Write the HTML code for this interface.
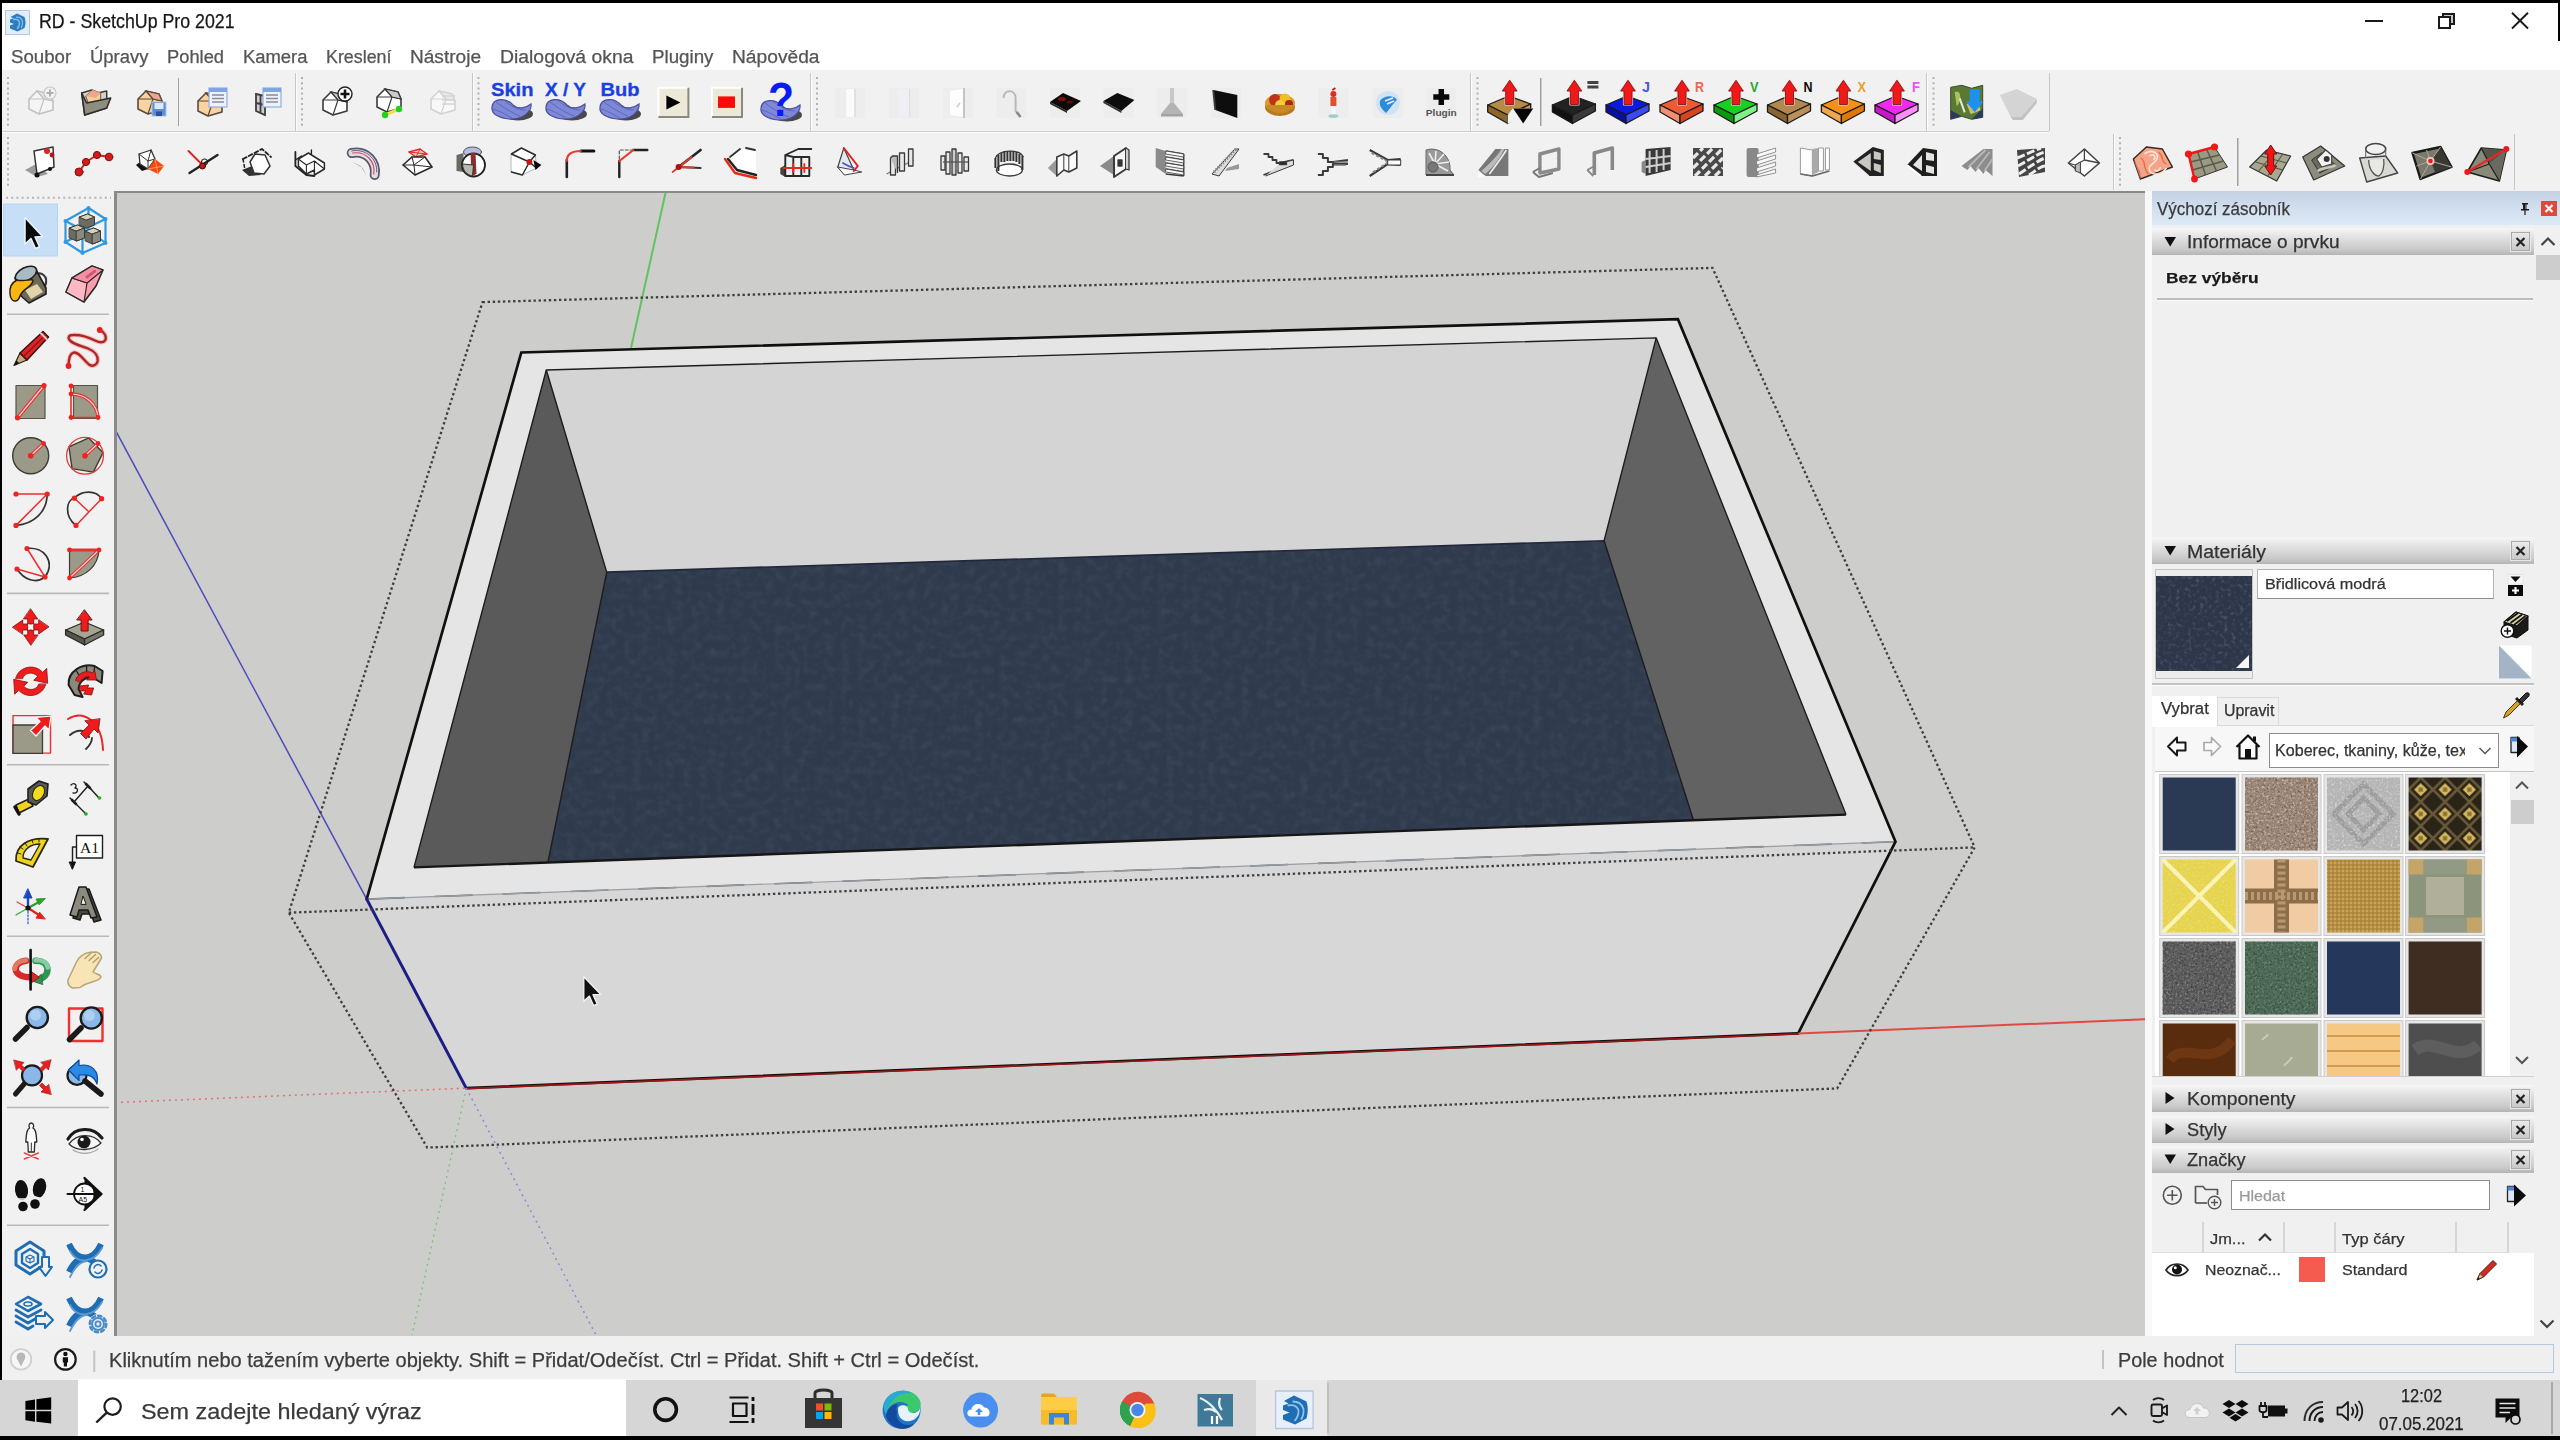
<!DOCTYPE html>
<html><head><meta charset="utf-8">
<style>
*{box-sizing:border-box;margin:0;padding:0}
html,body{width:2560px;height:1440px;overflow:hidden;background:#000;font-family:"Liberation Sans",sans-serif;color:#222}
.a{position:absolute}
.t{position:absolute;white-space:nowrap;line-height:1;transform-origin:0 0;-webkit-text-stroke:.25px currentColor}
#title{left:2px;top:3px;width:2556px;height:37px;background:#fff}
#menu{left:2px;top:40px;width:2558px;height:30px;background:#fff}
#tb{left:2px;top:70px;width:2558px;height:122px;background:#f1f1f1}
#lt{left:2px;top:192px;width:112px;height:1144px;background:#f1f1f1}
#vpb{left:114px;top:191px;width:2031px;height:1145px;background:#8a8a8a}
#vp{left:117px;top:193px;width:2028px;height:1143px;background:#cdcdcb;overflow:hidden}
#rp{left:2145px;top:191px;width:415px;height:1145px;background:#f0f0f0}
#sb{left:2px;top:1336px;width:2558px;height:44px;background:#f0f0f0}
#tk{left:0;top:1380px;width:2560px;height:55.500px;background:#d6d6d6}
.sh{position:absolute;left:7px;width:382px;height:27px;background:linear-gradient(#f6f6f6 0%,#dcdcdc 45%,#c9c9c9 80%,#b4b4b4 100%)}
.sh .x{position:absolute;right:3px;top:3px;width:21px;height:21px;border:1px solid #e8e8e8;outline:1px solid #aaa;outline-offset:-2px}
</style></head><body>
<div class="a" id="title"></div>
<div class="a" id="menu"></div>
<div class="a" style="left:2558px;top:0;width:2px;height:41px;background:#000"></div>
<!-- app icon -->
<div class="a" style="left:5px;top:10px;width:25px;height:25px;background:#e3edf9;border:1px solid #b9c7da"></div>
<svg class="a" style="left:7px;top:12px" width="21" height="21" viewBox="0 0 21 21"><path d="M10 1.5 L17.5 5 Q19.5 10.5 17.5 16 L10.5 19.5 L3 16.5 L3 13.5 L7 12 L3 10.5 L3 7.5 L6.5 6.3 L3.5 5 Z" fill="#2b7dc0"/><path d="M6 7.5 Q11 6.5 12.5 10 Q13 14 10 17 M9 5.2 Q14.5 5 15.5 9.5 Q16 13.5 14 16" fill="none" stroke="#7fc0ec" stroke-width="1.3"/></svg>
<div class="t" style="left:39.4px;top:11.94px;font-size:19.8px;color:#161616;transform:scaleX(0.8985)">RD - SketchUp Pro 2021</div>
<!-- window controls -->
<div class="a" style="left:2365px;top:20px;width:18px;height:2px;background:#1a1a1a"></div>
<div class="a" style="left:2442px;top:13px;width:13px;height:12px;border:2px solid #1a1a1a;background:#c9c9c9"></div>
<div class="a" style="left:2438px;top:16px;width:13px;height:13px;border:2px solid #1a1a1a;background:#fff"></div>
<svg class="a" style="left:2508px;top:9px" width="24" height="24" viewBox="0 0 24 24"><path d="M4 3.7 L20 19.5 M20 3.7 L4 19.5" stroke="#1a1a1a" stroke-width="1.9"/></svg>
<!-- menu -->
<div class="t" style="left:11.2px;top:48.80px;font-size:17.6px;color:#555;transform:scaleX(1.0611)">Soubor</div>
<div class="t" style="left:90px;top:48.80px;font-size:17.6px;color:#555;transform:scaleX(1.0496)">Úpravy</div>
<div class="t" style="left:166.5px;top:48.80px;font-size:17.6px;color:#555;transform:scaleX(1.0402)">Pohled</div>
<div class="t" style="left:242.5px;top:48.80px;font-size:17.6px;color:#555;transform:scaleX(1.0469)">Kamera</div>
<div class="t" style="left:326px;top:48.80px;font-size:17.6px;color:#555;transform:scaleX(1.0148)">Kreslení</div>
<div class="t" style="left:410px;top:48.80px;font-size:17.6px;color:#555;transform:scaleX(1.0837)">Nástroje</div>
<div class="t" style="left:500px;top:48.80px;font-size:17.6px;color:#555;transform:scaleX(1.1006)">Dialogová okna</div>
<div class="t" style="left:651.5px;top:48.80px;font-size:17.6px;color:#555;transform:scaleX(1.0655)">Pluginy</div>
<div class="t" style="left:731.5px;top:48.80px;font-size:17.6px;color:#555;transform:scaleX(1.0908)">Nápověda</div>
<div class="a" id="tb"></div>
<svg class="a" style="left:0;top:70px" width="2560" height="122" viewBox="0 70 2560 122" font-family="Liberation Sans" >
<defs>
<g id="grip"><line x1="0" y1="0" x2="0" y2="52" stroke="#b2b2b2" stroke-width="2" stroke-dasharray="2 3.2"/></g>
<g id="house"><path d="M-12,-3 L-4,-11 L9,-8 L12,-1 L12,8 L-2,12 L-12,7Z" fill="var(--f,#fff)" stroke="var(--s,#3a3a3a)" stroke-width="1.6" stroke-linejoin="round"/><path d="M-4,-11 L3,-3 L12,-1 M3,-3 L-2,12 M-12,-3 L3,-3" fill="none" stroke="var(--s,#3a3a3a)" stroke-width="1.2"/><path d="M-4,-11 L9,-8 L12,-1 L3,-3Z" fill="var(--r,#ccc)" stroke="var(--s,#3a3a3a)" stroke-width="1.2"/></g>
<g id="doc"><rect x="-9" y="-10" width="18" height="19" fill="#eef3fb" stroke="#8fb0e0" stroke-width="1.2"/><rect x="-9" y="-10" width="18" height="4" fill="#7ea6e0"/><path d="M-6,-3 H6 M-6,0.500 H6 M-6,4 H6" stroke="#8a8a9a" stroke-width="1.3"/></g>
<g id="blob"><ellipse cx="6" cy="6" rx="15" ry="6.500" fill="#2c2c2c" opacity=".85"/><path d="M-20,-1 C-19,-10 -6,-11 1,-3 C6,2 14,0 19,-4 C20,4 10,12 -3,11 C-13,10 -21,6 -20,-1Z" fill="#7d88d6" stroke="#4a4f9c" stroke-width="1.2"/><path d="M-16,-6 C-8,0 2,6 8,8 M-19,1 C-10,4 -4,8 0,10 M-8,-8 C-2,-2 6,2 14,2" stroke="#5b63b8" stroke-width="0.900" fill="none"/></g>
<g id="jpp"><path d="M-22,3 L-1,-6 L21,2 L-2,13Z" fill="var(--t)" stroke="#1a1a1a" stroke-width="1.300" stroke-linejoin="round"/><path d="M-22,3 L-2,13 L-2,21.500 L-22,10Z" fill="var(--l)" stroke="#1a1a1a" stroke-width="1.300" stroke-linejoin="round"/><path d="M21,2 L-2,13 L-2,21.500 L21,9Z" fill="var(--r)" stroke="#1a1a1a" stroke-width="1.300" stroke-linejoin="round"/><path d="M0,-21.700 L7.300,-11 L4,-11 L4,2.500 L-4,2.500 L-4,-11 L-7.300,-11Z" fill="#f31818" stroke="#f6d6d6" stroke-width="2.200" stroke-linejoin="round"/><path d="M0,-21.700 L7.300,-11 L4,-11 L4,2.500 L-4,2.500 L-4,-11 L-7.300,-11Z" fill="#f31818" stroke="#7a1c1c" stroke-width=".9" stroke-linejoin="round"/></g>
<g id="tile"><rect x="-15" y="-15" width="30" height="30" fill="#ededed"/></g>
</defs>
<!-- row separators -->
<rect x="2" y="131" width="2047" height="1" fill="#cfcfcf"/><rect x="2" y="132" width="2047" height="1" fill="#fbfbfb"/>
<g fill="#c6c6c6"><rect x="295" y="73" width="1" height="58"/><rect x="472" y="73" width="1" height="58"/><rect x="810" y="73" width="1" height="58"/><rect x="1470" y="73" width="1" height="58"/><rect x="1926" y="73" width="1" height="58"/><rect x="2049" y="73" width="1" height="58"/><rect x="2113" y="134" width="1" height="56"/><rect x="2514" y="134" width="1" height="56"/></g>
<g fill="#fdfdfd"><rect x="296" y="73" width="1" height="58"/><rect x="473" y="73" width="1" height="58"/><rect x="811" y="73" width="1" height="58"/><rect x="1471" y="73" width="1" height="58"/><rect x="1927" y="73" width="1" height="58"/><rect x="2114" y="134" width="1" height="56"/></g>
<g fill="#a0a0a0"><rect x="178" y="78" width="1" height="48"/><rect x="1540" y="78" width="1.500" height="48"/><rect x="2237" y="138" width="1.500" height="48"/></g>
<use href="#grip" x="8" y="77"/><use href="#grip" x="302" y="77"/><use href="#grip" x="478.500" y="77"/><use href="#grip" x="817" y="77"/><use href="#grip" x="1477.500" y="77"/><use href="#grip" x="1933.500" y="77"/>
<use href="#grip" x="8" y="137"/><use href="#grip" x="2120" y="137"/>
<!-- ROW 1 -->
<g transform="translate(41,102)" opacity=".9"><use href="#house" style="--f:#f6f6f6;--s:#bdbdbd;--r:#e2e2e2"/><circle cx="9" cy="-9" r="6" fill="#f4f4f4" stroke="#c4c4c4" stroke-width="1.2"/><path d="M9,-12.500 V-5.500 M5.500,-9 H12.500" stroke="#a8a8a8" stroke-width="2"/></g>
<g transform="translate(94.700,102)"><path d="M-13,-9 L-3,-12 L3,-9 L12,-11 L12,6 L-10,13Z" fill="#d8d4c4" stroke="#3a3a3a" stroke-width="1.500" stroke-linejoin="round"/><path d="M-9,-6 L-2,-12 L6,-9 L6,2 L-5,5Z" fill="#f8cf9c" stroke="#6a5a4a" stroke-width="1"/><path d="M-2,-12 L6,-9 L1,-4 L-9,-6Z" fill="#eda78a"/><path d="M-13,-9 L-8,1 L16,-4 L12,6 L-10,13Z" fill="#8e8e7e" stroke="#2e2e2e" stroke-width="1.600" stroke-linejoin="round"/></g>
<g transform="translate(150,102)"><use href="#house" style="--f:#f9d3a2;--s:#5a4a3a;--r:#eba88c"/><rect x="2" y="0" width="14" height="14" fill="#5b8ed8" stroke="#a8c4ee" stroke-width="1"/><rect x="4.500" y="1" width="9" height="6" fill="#dfe9fb"/><rect x="6" y="9.500" width="6" height="4.500" fill="#2a52a0"/></g>
<g transform="translate(213,102)"><use href="#house" style="--f:#f9d3a2;--s:#5a4a3a;--r:#eba88c" x="-3" y="2"/><use href="#doc" x="5" y="-4"/></g>
<g transform="translate(268,102)"><path d="M-12,-8 L-3,-6 L-3,13 L-12,9Z M-7.500,-7 V11 M-12,1 L-3,3" fill="#d0d0d0" stroke="#3c3c3c" stroke-width="1.800"/><use href="#doc" x="4" y="-4"/></g>
<g transform="translate(335,103)"><use href="#house"/><circle cx="10" cy="-9" r="7" fill="#fff" stroke="#222" stroke-width="1.400"/><path d="M10,-13.500 V-4.500 M5.500,-9 H14.500" stroke="#111" stroke-width="2.600"/></g>
<g transform="translate(389,102)"><use href="#house" y="-2"/><path d="M-4,13 L10,7" stroke="#f0e040" stroke-width="3"/><circle cx="-4" cy="13" r="3.200" fill="#22d022"/><circle cx="10" cy="7" r="3.200" fill="#22d022"/></g>
<g transform="translate(443,102)" opacity=".85"><use href="#house" style="--f:#fafafa;--s:#cccccc;--r:#e8e8e8"/><path d="M-1,-6 H12 M-1,-2 H12 M-1,2 H12" stroke="#d0d0d0" stroke-width="1.400"/></g>
<!-- skin/xy/bub -->
<use href="#blob" x="512" y="108"/><use href="#blob" x="566" y="108"/><use href="#blob" x="620" y="108"/>
<g font-weight="bold" font-size="17.500" fill="#1b3fe0" stroke="#1b3fe0" stroke-width=".3"><text x="491" y="96.300" textLength="42.500" lengthAdjust="spacingAndGlyphs">Skin</text><text x="545" y="96.300" textLength="41" lengthAdjust="spacingAndGlyphs">X / Y</text><text x="600.500" y="96.300" textLength="39" lengthAdjust="spacingAndGlyphs">Bub</text></g>
<!-- play / stop -->
<g transform="translate(673.400,102.400)"><rect x="-15" y="-14.600" width="30" height="29.200" fill="#ece9d8"/><path d="M-15,14.600 V-14.600 H15" fill="none" stroke="#fff" stroke-width="2"/><path d="M-15,14.600 H15 V-14.600" fill="none" stroke="#8c897c" stroke-width="2"/><path d="M-7,-7 L7,0 L-7,7Z" fill="#000"/></g>
<g transform="translate(727,102.400)"><rect x="-15" y="-14.600" width="30" height="29.200" fill="#ece9d8"/><path d="M-15,14.600 V-14.600 H15" fill="none" stroke="#fff" stroke-width="2"/><path d="M-15,14.600 H15 V-14.600" fill="none" stroke="#8c897c" stroke-width="2"/><rect x="-9" y="-6" width="17" height="11.500" fill="#fb0a0a"/></g>
<g transform="translate(781,102)"><use href="#blob" y="7"/><text x="-13" y="14" font-size="48" font-weight="bold" fill="#0a1cf4" textLength="26" lengthAdjust="spacingAndGlyphs">?</text></g>
<!-- greyed kitchen etc -->
<g transform="translate(850.300,103)"><use href="#tile"/><rect x="-4" y="-14" width="8" height="28" fill="#fbfbfb"/><rect x="4" y="-14" width="1.500" height="28" fill="#dcdcdc"/></g>
<g transform="translate(904,103)"><use href="#tile"/><rect x="-6" y="-14" width="11" height="28" fill="#f0f0f4"/><rect x="5" y="-14" width="1.200" height="28" fill="#dedede"/></g>
<g transform="translate(958,103)"><use href="#tile"/><path d="M-8,-12 L5,-14 L5,14 L-8,12Z" fill="#fdfdfd"/><rect x="5" y="-15" width="2" height="30" fill="#c4c4c4"/><path d="M-1,4 l3,-4" stroke="#ccc" stroke-width="1.500"/></g>
<g transform="translate(1011.600,103)"><use href="#tile"/><path d="M-8,-5 C-8,-14 4,-14 4,-5 L4,8 L8,12" fill="none" stroke="#b8b8b8" stroke-width="2"/><path d="M5,9 l4,5" stroke="#888" stroke-width="2.500"/></g>
<g transform="translate(1065,101)"><use href="#tile" y="2"/><path d="M-15,1 L-2,-8 L16,0 L2,10Z" fill="#100808"/><path d="M-15,1 L2,10 L2,12 L-15,3Z" fill="#2a2a2a"/><ellipse cx="-3" cy="-2" rx="4" ry="2" fill="#7a1208"/><ellipse cx="5" cy="1" rx="3" ry="1.600" fill="#5a0e06"/></g>
<g transform="translate(1118.400,101)"><use href="#tile" y="2"/><path d="M-15,0 L-1,-8 L16,-1 L3,10Z" fill="#0c0c0c"/><path d="M-15,0 L3,10 L3,12 L-15,2Z" fill="#303030"/></g>
<g transform="translate(1172,103)"><use href="#tile"/><rect x="-2" y="-15" width="4" height="16" fill="#c8c8c8"/><path d="M-2,0 L2,0 L11,11 L-11,11Z" fill="#b4b4b4"/><path d="M-11,11 L11,11 L11,13.500 L-11,13.500Z" fill="#a2a2a2"/></g>
<g transform="translate(1226.300,103)"><use href="#tile"/><path d="M-13,-13 L11,-8 L11,15 L-11,7Z" fill="#0e0e0e"/><path d="M-13,-13 L-11,7" stroke="#3a3a3a" stroke-width="2"/></g>
<g transform="translate(1280,102)"><ellipse cx="0" cy="5" rx="15" ry="9" fill="#b87820"/><ellipse cx="0" cy="1" rx="15" ry="9" fill="#d89a28"/><circle cx="-5" cy="-2" r="6" fill="#c0301c"/><circle cx="5" cy="-3" r="5.500" fill="#f0c020"/><circle cx="0" cy="3" r="5" fill="#f4d030"/><circle cx="9" cy="2" r="4" fill="#a82818"/><path d="M-14,3 C-8,14 8,14 14,3" fill="#c88a24"/></g>
<g transform="translate(1333.400,103)"><use href="#tile"/><circle cx="0" cy="-9" r="3" fill="#d83020"/><path d="M-3,-6 h6 v9 h-6z" fill="#e05030"/><path d="M-2,3 h4 v10 h-4z" fill="#f8f8f8"/><ellipse cx="0" cy="13" rx="5" ry="1.800" fill="#9cc"/><path d="M-1,-13 l3,-2" stroke="#c02010" stroke-width="2"/></g>
<g transform="translate(1388,103)"><use href="#tile"/><circle cx="0" cy="0" r="12" fill="#cfe2f6"/><path d="M-8,-2 C-4,-8 6,-8 9,-3 C5,0 2,6 -2,10 C-6,6 -9,3 -8,-2Z" fill="#2f8ad8"/><path d="M-3,-2 l8,-3 M-1,1 l7,-3" stroke="#e6f0fa" stroke-width="1.600"/></g>
<g transform="translate(1441.300,103)"><use href="#tile"/><path d="M0,-14 V2 M-8,-6 H8" stroke="#080808" stroke-width="5.500"/><text x="-15.500" y="12.500" font-size="9.500" font-weight="bold" fill="#555" textLength="31" lengthAdjust="spacingAndGlyphs">Plugin</text></g>
<!-- JPP -->
<g transform="translate(1509.700,102)"><use href="#jpp" style="--t:#b88a48;--l:#8e6428;--r:#c89850"/><path d="M-2,13 L3,6.500 L23,6.500 L23,12 L-2,22Z" fill="#f1f1f1"/><path d="M3.500,6.500 L23.500,6.500 L13.500,21.500Z" fill="#050505"/></g>
<g transform="translate(1574.400,102)"><use href="#jpp" style="--t:#222;--l:#111;--r:#3a3a3a"/><path d="M13,-19.500 h11 M13,-15 h11" stroke="#444" stroke-width="2.800"/></g>
<g transform="translate(1628,102)"><use href="#jpp" style="--t:#0a1ae0;--l:#0810a0;--r:#3a4cf0"/><text x="14" y="-10.500" font-size="15.500" font-weight="bold" fill="#4a58e8" textLength="8" lengthAdjust="spacingAndGlyphs">J</text></g>
<g transform="translate(1682,102)"><use href="#jpp" style="--t:#ee5a34;--l:#f09070;--r:#d84420"/><text x="13" y="-10.500" font-size="15.500" font-weight="bold" fill="#f0684a" textLength="9" lengthAdjust="spacingAndGlyphs">R</text></g>
<g transform="translate(1736,102)"><use href="#jpp" style="--t:#18d020;--l:#0a9a10;--r:#80f088"/><text x="14" y="-10.500" font-size="15.500" font-weight="bold" fill="#22a832" textLength="8.500" lengthAdjust="spacingAndGlyphs">V</text></g>
<g transform="translate(1789.500,102)"><use href="#jpp" style="--t:#b08850;--l:#8a6430;--r:#b89058"/><text x="14" y="-10.500" font-size="15.500" font-weight="bold" fill="#0a0a0a" textLength="9" lengthAdjust="spacingAndGlyphs">N</text></g>
<g transform="translate(1843.400,102)"><use href="#jpp" style="--t:#f89018;--l:#f0a850;--r:#e07808"/><text x="14" y="-10.500" font-size="15.500" font-weight="bold" fill="#f09a28" textLength="8.500" lengthAdjust="spacingAndGlyphs">X</text></g>
<g transform="translate(1897,102)"><use href="#jpp" style="--t:#f028f0;--l:#c818c8;--r:#f890f8"/><text x="15" y="-10.500" font-size="15.500" font-weight="bold" fill="#f050f0" textLength="8" lengthAdjust="spacingAndGlyphs">F</text></g>
<!-- map + grey -->
<g transform="translate(1966.700,102.300)"><path d="M-16,-15 L-5,-17 L5,-14 L16,-17 L16,15 L5,17 L-5,14 L-16,17Z" fill="#5a7a34" stroke="#3a4a28" stroke-width="1"/><path d="M-12,-10 C-6,-14 -4,-2 -10,4Z" fill="#a8c060"/><path d="M-16,8 L-5,14 L5,17 L16,6 L16,15 L5,17 L-5,14 L-16,17Z" fill="#2a3a5a"/><path d="M0,2 L10,-4 L14,8 L4,12Z" fill="#c8c070"/><path d="M-7,-4 l5,14" stroke="#e8e8d8" stroke-width="2"/><path d="M3,-13 H13 V-1 H17 L8,10 L-1,-1 H3Z" fill="#1e90f0"/></g>
<g transform="translate(2018.800,103)"><path d="M-19,-8 L-2,-14 L18,-4 L2,14 L-8,14Z" fill="#d4d4d4"/><path d="M-8,14 L2,14 L18,-4 L18,0 L4,17 L-6,17Z" fill="#c2c2c2"/></g>
<!-- ROW 2 -->
<g stroke-linejoin="round" stroke-linecap="round">
<g transform="translate(42,162)"><path d="M-17,8 L-6,2 L6,12 L-5,15Z" fill="#9a9a9a"/><path d="M-8,-11 L11,-15 L12,5 L-5,12Z" fill="#fff" stroke="#333" stroke-width="1.500"/><circle cx="5" cy="-11" r="3" fill="#d22"/><circle cx="10" cy="-7" r="2.400" fill="#b11"/><circle cx="-5" cy="13" r="2.500" fill="#111"/><circle cx="8" cy="7" r="2" fill="#111"/></g>
<g transform="translate(94,162)"><path d="M-15,10 L-8,0 L3,-7 L15,-5" fill="none" stroke="#c22" stroke-width="2"/><circle cx="-15" cy="10" r="4" fill="#d21c1c" stroke="#7a1010"/><circle cx="-8" cy="0" r="3.600" fill="#d21c1c" stroke="#7a1010"/><circle cx="3" cy="-7" r="3.600" fill="#d21c1c" stroke="#7a1010"/><circle cx="15" cy="-5" r="3.800" fill="#d21c1c" stroke="#7a1010"/></g>
<g transform="translate(150,162)"><path d="M-14,3 L-8,9 L-2,7 L-10,0Z" fill="#111"/><path d="M-11,-8 L1,-12 L5,-3 L-2,7 L-10,2Z" fill="#fff" stroke="#333" stroke-width="1.300"/><path d="M-11,-8 L-2,-1 L1,-12 M-2,-1 L5,-3 M-2,-1 L-2,7" stroke="#333" stroke-width="1" fill="none"/><path d="M-2,7 L5,-3 L14,4 L8,12Z" fill="#f4480c"/><path d="M5,-3 L8,12 M-2,7 L14,4" stroke="#ff9a70" stroke-width="1"/></g>
<g transform="translate(202.500,162)"><path d="M-14,-11 L1,4" stroke="#e02020" stroke-width="2"/><path d="M-13,11 L15,-7" stroke="#222" stroke-width="2.400"/><circle cx="2" cy="0" r="3" fill="none" stroke="#222" stroke-width="1.200"/><circle cx="0" cy="4" r="3" fill="#c01818" stroke="#500"/></g>
<g transform="translate(257,162)"><path d="M-15,8 L-5,4 L4,13 L-8,14Z" fill="#333"/><path d="M-14,-3 L5,-13 L14,-5" fill="none" stroke="#222" stroke-width="1.800" stroke-dasharray="4 2.500"/><path d="M-14,-3 L-12,8" stroke="#222" stroke-width="1.500" stroke-dasharray="3 2.500"/><path d="M-2,-8 L8,-7 L13,4 L7,12 L-3,11 L-7,0Z" fill="#fff" stroke="#333" stroke-width="1.500"/></g>
<g transform="translate(309.400,162)"><path d="M-14,-10 V4 L-3,13 L5,14" fill="none" stroke="#222" stroke-width="1.800"/><path d="M-14,-2 L-8,-6 M2,-12 L2,-8" stroke="#222" stroke-width="1.400"/><path d="M-11,-3 L-1,-9 L15,1 L15,7 L5,13 L5,8 L-3,12 L-11,4Z" fill="#fff" stroke="#2a2a2a" stroke-width="1.500"/><path d="M-11,-3 L-3,3 L5,-1 L15,7 M-3,3 L-3,12 M5,-1 L5,8" fill="none" stroke="#2a2a2a" stroke-width="1.100"/></g>
<g transform="translate(364.700,162)"><path d="M-14,-1 L-4,4 L2,14 L-2,6Z" fill="#999"/><path d="M-13,-9 C2,-12 12,0 10,13" fill="none" stroke="#5a5a66" stroke-width="10"/><path d="M-13,-9 C2,-12 12,0 10,13" fill="none" stroke="#e4dce4" stroke-width="6.500"/><path d="M-12,-9 C2,-11 11,0 9,12" fill="none" stroke="#d05060" stroke-width="1.200"/><path d="M-13,-11 C0,-14 13,-4 12,10" fill="none" stroke="#5a5aa0" stroke-width="1"/></g>
<g transform="translate(417,162)"><path d="M-8,-10 L3,-13 L10,-8 L-1,-5Z" fill="#fbd0c8" stroke="#e82828" stroke-width="1.500"/><path d="M-8,-10 L10,-8 M3,-13 L-1,-5" stroke="#e82828" stroke-width="1"/><path d="M-14,3 L-5,-5 L8,-5 L15,5 L-2,13Z" fill="#fff" stroke="#2a2a2a" stroke-width="1.600"/><path d="M-5,-5 L-3,3 L8,-5 M-3,3 L-14,3 M-3,3 L15,5 M-3,3 L-2,13" stroke="#2a2a2a" stroke-width="1" fill="none"/></g>
<g transform="translate(471.500,162)"><path d="M-15,-7 L-8,-9 L-8,10 L-15,9Z" fill="#6a6a62"/><ellipse cx="1" cy="-10" rx="9" ry="5" fill="#b8bce0" stroke="#555" stroke-width="1"/><circle cx="2" cy="3" r="11.500" fill="#fff" stroke="#222" stroke-width="1.800"/><path d="M-1,-9 L4,-9 L5,12 L0,14Z" fill="#8a3028"/><path d="M-9,2 L2,3 L1,14 C-5,13 -9,8 -9,2Z" fill="#b8b8b0" stroke="#333" stroke-width="1"/></g>
<g transform="translate(524.400,162)"><path d="M-13,-8 L-3,-14 L11,-7 L12,6 L-2,13 L-13,10Z" fill="#fff" stroke="#aaa" stroke-width=".8"/><path d="M-13,-8 L-3,-14 L11,-7 L5,0 L-13,-8 M5,0 L12,6 M5,0 L-2,13 L-13,10" fill="none" stroke="#2a2a2a" stroke-width="1.500"/><path d="M9,-2 L17,3 L11,8Z" fill="#0a0a0a"/><circle cx="5" cy="0" r="3" fill="#c41818"/></g>
<g transform="translate(578.800,162)"><path d="M-12,15 V-2" stroke="#222" stroke-width="2.600"/><path d="M2,-11 H15" stroke="#111" stroke-width="3.200"/><path d="M-12,-1 C-12,-8 -7,-11 2,-11" fill="none" stroke="#e83a2a" stroke-width="2.200"/></g>
<g transform="translate(631.300,162)"><path d="M-12,15 V-1" stroke="#222" stroke-width="2.400"/><path d="M2,-12 H16" stroke="#222" stroke-width="2.400"/><path d="M-12,-1 L2,-12" stroke="#e83a2a" stroke-width="2.200"/><path d="M-12,-3 V-12 H0" fill="none" stroke="#555" stroke-width="1.200" stroke-dasharray="3 2"/></g>
<g transform="translate(685.600,162)"><path d="M-7,5 L15,-12" stroke="#222" stroke-width="2.600"/><path d="M-7,5 L15,6" stroke="#333" stroke-width="2"/><path d="M-13,10 L6,-5 M-7,5 L8,5.500" stroke="#e83a2a" stroke-width="1.800"/><circle cx="-7" cy="5" r="3" fill="#a81414"/></g>
<g transform="translate(740,162)"><path d="M-10,-5 L0,-13 L16,-12 L16,12 L-2,7Z" fill="#fff"/><path d="M-10,-5 L0,-13 M6,-14 L15,-12" stroke="#333" stroke-width="1.800"/><path d="M-12,-3 L-3,8 L16,13" fill="none" stroke="#222" stroke-width="2.400"/><path d="M-15,-3 L-5,11 L16,16" fill="none" stroke="#e82a1a" stroke-width="2.400"/></g>
<g transform="translate(795.300,162)"><path d="M-15,6 L-10,3 L-10,15 L-15,12Z" fill="#444"/><path d="M-10,-7 L3,-13 L16,-13 M-10,-7 V14 H14 V-5 M-10,-7 L-2,-5 L14,-5 M-2,-5 V14 M6,-5 V14" fill="none" stroke="#2a2a2a" stroke-width="1.900"/><path d="M-12,6 H16 M-2,2 V10 M9,2 V10" stroke="#e82a1a" stroke-width="1.800"/></g>
<g transform="translate(847.800,162)"><path d="M-10,5 L-4,-14 L6,8 L-3,12Z" fill="#e4e6f0" stroke="#444" stroke-width="1.200"/><path d="M-10,5 L6,8 L14,10 L-3,13Z" fill="#fafafa" stroke="#444" stroke-width="1"/><path d="M-4,-14 L10,4 L6,9" fill="none" stroke="#e02020" stroke-width="2"/><path d="M-5,1 C0,4 3,5 6,6" stroke="#4a50d0" stroke-width="1.500" fill="none"/></g>
</g>
<g stroke="#3a3a3a" stroke-width="1.300" stroke-linejoin="round" fill="#e8e8e8">
<g transform="translate(901.500,162)"><path d="M-15,12 L12,-2" stroke="#777"/><rect x="-11" y="-4" width="5" height="17"/><rect x="-2" y="-9" width="5" height="18"/><rect x="7" y="-13" width="4.500" height="17"/><path d="M-11,-4 l2,-2 h5 v17" fill="#bbb"/></g>
<g transform="translate(955,162)"><rect x="-14" y="-6" width="4" height="14"/><rect x="-9" y="-10" width="4" height="22"/><rect x="-3" y="-13" width="4" height="26" fill="#ccc"/><rect x="3" y="-9" width="4" height="20"/><rect x="9" y="-5" width="4.500" height="14"/><path d="M-12,0 H13" stroke="#555"/></g>
<g transform="translate(1009.400,162)"><ellipse cx="0" cy="8" rx="13" ry="6" fill="#fff"/><path d="M-14,-4 V6 M-11,-7 V9 M-8,-9 V0 M-5,-11 V0 M-2,-11 V-1 M1,-11 V-1 M4,-11 V-1 M7,-10 V0 M10,-8 V2 M13,-6 V8" stroke="#333" stroke-width="2"/><path d="M-14,-4 C-10,-13 10,-13 14,-5" fill="none"/></g>
<g transform="translate(1063.800,162)"><path d="M-16,6 L-6,-4 L-6,15Z" fill="#9a9a9a" stroke="none"/><path d="M-7,-5 L0,-8 L5,-6 L13,-11 L13,6 L5,10 L0,8 L-7,14Z" fill="#fafafa" stroke-width="1.600"/><path d="M0,-8 V8 M5,-6 V10" stroke-width="1"/></g>
<g transform="translate(1117,162)"><path d="M-17,4 L-3,-6 L-3,13Z" fill="#8a8a8a" stroke="none"/><path d="M-3,-6 L9,-14 L9,7 L-3,15Z" fill="#f6f6f6" stroke-width="2"/><path d="M9,-14 L12,-12 V8 L9,7" fill="#ccc"/><rect x="1" y="-2" width="4" height="6" fill="#333"/></g>
<g transform="translate(1169.700,162)"><path d="M-14,-14 L-4,-11 V12 L-14,5Z" fill="#8a8a8a" stroke="none"/><path d="M-4,-11 L14,-8 M-4,-5 L14,-2 M-4,1 L14,4 M-4,7 L14,10 M-4,12 L14,14 M14,-8 V14" stroke-width="1.500"/><path d="M-4,-11 L14,-8 V-5 L-4,-8Z M-4,-5 L14,-2 V1 L-4,-2Z M-4,1 L14,4 V7 L-4,4Z M-4,7 L14,10 V13 L-4,10Z" fill="#fff" stroke-width=".8"/></g>
<g transform="translate(1225,162)"><path d="M-13,12 L10,-13 L14,-13 L-6,14Z" fill="#dcdcdc" stroke-width="1"/><path d="M-11,10 L11,-13" stroke="#888" stroke-dasharray="1.500 1.500" stroke-width="3"/><path d="M2,6 L14,2 L14,7 L0,9Z" fill="#999" stroke="none"/></g>
<g transform="translate(1277.500,162)"><path d="M-14,-8 h5 v3 h4 v3 h4 v3 h4 L16,-2 M-14,13 L15,2" fill="none" stroke-width="1.800"/><path d="M3,1 L16,-2 L16,3 L-12,14" fill="#ddd" stroke-width="1"/><rect x="2" y="0" width="7" height="2.500" fill="#222"/></g>
<g transform="translate(1331.900,162)"><path d="M-14,-8 h5 v4 h5 v4 h5 L16,-2 M-14,13 h5 v-4 h5 v-4 h5 v-3 L16,2" fill="none" stroke-width="2"/><path d="M2,0 H16 M2,3 H14" stroke="#777" stroke-width="1.600"/></g>
<g transform="translate(1384.700,162)"><path d="M-15,-12 L3,-2 L16,-3 M-15,14 L3,2 L16,3" fill="none" stroke-width="2.200"/><path d="M-13,-9 L4,0 L-13,11" fill="none" stroke="#888" stroke-width="2" stroke-dasharray="3 2"/><path d="M3,-2 H16 V3 H3Z" fill="#fff" stroke-width="1"/></g>
<g transform="translate(1439,162)" stroke="#666"><path d="M-13,-12 C0,-16 12,-6 11,8 L15,13 L-13,13Z" fill="#9a9a9a" stroke-width="1"/><path d="M-4,2 L-10,-9 M-4,2 L-3,-11 M-4,2 L5,-8 M-4,2 L10,0 M-4,2 L9,9" stroke="#eee" stroke-width="1.600"/><circle cx="-6" cy="5" r="5" fill="#777"/><path d="M-13,13 H15" stroke="#444" stroke-width="2"/></g>
<g transform="translate(1493.400,162)" stroke="none"><path d="M-15,8 L2,-13 L15,-13 L15,14 L-8,14Z" fill="#777"/><path d="M-12,9 C-4,2 4,-6 8,-13 L11,-13 C7,-4 0,5 -8,12Z" fill="#bbb"/><path d="M-4,12 C2,4 8,-4 13,-12" fill="none" stroke="#eee" stroke-width="1.600"/><path d="M-15,11 L-8,14 L-15,15Z" fill="#fff"/></g>
<g transform="translate(1546.900,162)" stroke="#777" fill="none"><path d="M-7,-8 L12,-13 V7 L-7,11Z" stroke-width="3.400" stroke="#8a8a8a"/><path d="M-14,10 L-7,6 M-14,10 L-8,15 L6,11" stroke-width="2"/></g>
<g transform="translate(1601.300,162)" stroke="#888" fill="none"><path d="M-7,13 V-9 L11,-14 V8" stroke-width="3.600"/><path d="M-14,8 L-7,4 M-14,8 L-8,14" stroke-width="1.800"/></g>
<g transform="translate(1655.600,162)" stroke="none"><path d="M-14,0 L-10,-2 V12 L-14,10Z" fill="#888"/><path d="M-10,-13 L15,-15 V8 L-10,14Z" fill="#3a3a3a"/><path d="M-6,-11 V11 M1,-12 V10 M8,-13 V8 M-10,-3 L15,-6 M-10,5 L15,1" stroke="#cfcfcf" stroke-width="2"/></g>
<g transform="translate(1708,162)" stroke="none"><rect x="-15" y="-14" width="30" height="28" fill="#4a4a4a"/><path d="M-15,-4 L-5,-14 M-15,6 L5,-14 M-13,14 L15,-14 M-3,14 L15,-4 M7,14 L15,6" stroke="#e8e8e8" stroke-width="3.200" stroke-dasharray="7 3"/></g>
<g transform="translate(1761.600,162)" stroke="none"><rect x="-15" y="-14" width="12" height="29" fill="#888" rx="2"/><path d="M-5,-8 L14,-14 V-10 L-5,-4Z M-5,-1 L14,-7 V-3 L-5,3Z M-5,6 L14,0 V4 L-5,10Z M-5,13 L14,7 V11 L-5,15Z" fill="#f8f8f8" stroke="#777" stroke-width=".8"/></g>
<g transform="translate(1814.400,162)"><path d="M-14,-14 V12 L-2,14 V-12Z" fill="#fdfdfd" stroke="#999" stroke-width="1"/><path d="M-2,-13 L4,-14 V10 L-2,13Z" fill="#aaa" stroke="none"/><path d="M4,-14 H9 V9 H4Z M11,-14 H15 V8 H11Z" fill="#fff" stroke="#999" stroke-width="1"/><path d="M-14,12 L-2,14 L15,9" fill="none" stroke="#666" stroke-width="1.500"/></g>
<g transform="translate(1868.800,162)" stroke="none"><path d="M-16,0 L4,-15 L15,-12 L15,14 L0,14Z" fill="#222"/><path d="M-11,0 L2,-9 L2,9Z M5,-11 L12,-9 L12,-2 L5,-3Z M5,1 L12,3 L12,11 L5,8Z" fill="#c8c8c0"/><path d="M-16,0 L0,14" stroke="#eee" stroke-width="1.500"/></g>
<g transform="translate(1923,162)" stroke="none"><path d="M-16,3 L0,-14 L14,-12 L14,14 L-2,14Z" fill="#1e1e1e"/><path d="M-10,3 L-1,-7 L-1,9Z M3,-10 L11,-8 L11,-1 L3,-2Z M3,3 L11,5 L11,12 L3,10Z" fill="#e4e4e0"/><path d="M-16,3 L-2,14" stroke="#fff" stroke-width="2"/></g>
<g transform="translate(1977.500,162)" stroke="none"><path d="M-16,4 L6,-13 L15,-13 L15,14 L8,8 L6,12 L1,6 L-2,10 L-7,4 L-10,8Z" fill="#8c8c8c"/><path d="M-9,5 L8,-12 M-1,7 L12,-10 M7,9 L15,-3" stroke="#b8b8b8" stroke-width="1.800"/></g>
<g transform="translate(2031,162)" stroke="none"><path d="M-14,-12 L14,-14 L14,10 L-12,15Z" fill="#444"/><path d="M-14,-4 C-4,-8 4,-12 10,-14 M-13,4 C-2,-2 6,-8 14,-10 M-12,12 C0,4 8,-2 14,-4 M-2,13 C6,8 10,4 14,4" stroke="#eee" stroke-width="3" stroke-dasharray="8 2.500" fill="none"/></g>
<g transform="translate(2083.400,162)" stroke="#444"><path d="M-15,1 L1,-13 L16,1 L1,14Z" fill="#fff" stroke-width="1.600"/><path d="M1,-13 L1,-2 L16,1 M1,-2 L-8,3 L-8,9 M-15,1 L-8,3 M-3,0 V11" fill="none" stroke-width="1.300"/><path d="M-8,3 L-3,0 L-3,11 L-8,9Z" fill="#bbb" stroke-width="1"/></g>
</g>
<!-- sandbox -->
<g stroke-linejoin="round">
<g transform="translate(2152.400,162)"><path d="M-19,-3 L-6,-15 L10,-13 L20,5 L-12,17Z" fill="#f4a488" stroke="#3a2a22" stroke-width="1.500"/><path d="M-19,-3 L-12,17 L-12,10Z" fill="#c87858"/><path d="M-8,-8 C0,-14 8,-8 4,-2 C0,3 -6,4 -2,10 C2,14 10,12 14,6 M-3,-6 C2,-9 4,-5 1,-2 M2,8 C5,10 8,8 8,5" fill="none" stroke="#fde4d8" stroke-width="1.600"/><path d="M-12,-4 C-6,-2 -10,6 -4,12 M6,-10 C12,-6 8,0 14,2" fill="none" stroke="#e86838" stroke-width="1.300"/></g>
<g transform="translate(2206.500,162)"><path d="M-18,-8 L8,-15 L21,5 L-12,17Z" fill="#9a9a84" stroke="#333" stroke-width="1"/><path d="M-9,-10.500 L-1,13 M0,-13 L10,9 M-16,0 L13,-7 M-14,8 L17,-1" stroke="#5a5a4a" stroke-width="1.500"/><path d="M-12,17 L-18,-8 L8,-15" fill="none" stroke="#f01818" stroke-width="2.400"/><circle cx="-18" cy="-8" r="3.600" fill="#f01818"/><circle cx="8" cy="-15" r="3.600" fill="#f01818"/><circle cx="-12" cy="17" r="3.400" fill="#f01818"/></g>
<g transform="translate(2270.700,162)"><path d="M-21,5 L-4,-12 L20,-6 L6,19Z" fill="#a8a890" stroke="#333" stroke-width="1.200"/><path d="M-15,0 L12,8 M-10,-6 L16,1 M-12,9 L4,-10 M-3,14 L12,-8" stroke="#54544a" stroke-width="1.100"/><path d="M0,-17 L6,-8 L3,-8 L3,4 L6,4 L0,13 L-6,4 L-3,4 L-3,-8 L-6,-8Z" fill="#f01414" stroke="#701010" stroke-width="1"/></g>
<g transform="translate(2323.700,162)"><path d="M-21,-5 L-3,-16 L21,4 L-10,18Z" fill="#8c8c7c" stroke="#333" stroke-width="1.200"/><path d="M-12,-2 L-2,-9 L12,3 L-4,11Z" fill="#6a6a5e" stroke="#333" stroke-width="1"/><path d="M-7,-3 L2,-12 L8,-7 L8,2 L-2,5Z" fill="#f4f4f4" stroke="#444" stroke-width="1.200"/><circle cx="3" cy="-3" r="3" fill="#333"/><path d="M-6,9 C0,5 8,6 12,3" stroke="#c8c8b8" stroke-width="2.400" fill="none"/></g>
<g transform="translate(2376.700,162)"><path d="M-17,-4 L9,-6 L21,11 L-10,20Z" fill="#d8d8d4" stroke="#444" stroke-width="1.400"/><ellipse cx="-1" cy="-13" rx="10" ry="5.500" fill="none" stroke="#444" stroke-width="1.600"/><path d="M-8,-2 C-8,8 -2,14 2,14 C6,12 8,4 7,-3" fill="#e8e8e4" stroke="#555" stroke-width="1.300"/><path d="M-11,-13 V-4 M9,-13 V-5" stroke="#666" stroke-width="1"/></g>
<g transform="translate(2431.500,162)"><path d="M-19,-9 L9,-15 L20,5 L-11,17Z" fill="#7a7a6c" stroke="#1a1a1a" stroke-width="2.400"/><path d="M9,-15 L20,5 L4,11 L-1,-1Z" fill="#3a3a34"/><path d="M-19,-9 L-1,-1 L-11,17 M9,-15 L-1,-1 L20,5 M-5,-12 L-1,-1 M-15,4 L-1,-1" stroke="#aaa898" stroke-width="1" fill="none"/><circle cx="-1" cy="-1" r="4" fill="#f4c8c8"/><circle cx="-1" cy="-1" r="2.300" fill="#f01818"/></g>
<g transform="translate(2486.300,162)"><path d="M-19,10 L-5,-14 L20,-12 L13,19Z" fill="#8a8a7a" stroke="#1e1e1e" stroke-width="1.600"/><path d="M-5,-14 L3,2 L20,-12Z" fill="#55554a"/><path d="M3,2 L13,19 L20,-12Z" fill="#6a6a5e"/><path d="M-19,10 L3,2 L13,19 M-5,-14 L3,2" stroke="#1e1e1e" stroke-width="1.200" fill="none"/><path d="M-19,10 L20,-13" stroke="#e8281e" stroke-width="2.200"/><circle cx="-19" cy="10" r="3" fill="#f01818"/><circle cx="20" cy="-13" r="3" fill="#f01818"/></g>
</g>
</svg>
<div class="a" id="lt"></div>
<svg class="a" style="left:0;top:192px" width="116" height="1146" viewBox="0 192 116 1146" stroke-linejoin="round" stroke-linecap="round">
<line x1="6" y1="197.800" x2="111" y2="197.800" stroke="#b4b4b4" stroke-width="2" stroke-dasharray="2 3.200" stroke-linecap="butt"/>
<g stroke="#b9b9b9" stroke-width="1.600" stroke-linecap="butt"><path d="M7,314.300 H109 M7,593.400 H109 M7,764.800 H109 M7,936.200 H109 M7,1107.500 H109 M7,1225.300 H109"/></g>
<!-- select -->
<rect x="4" y="204" width="53.500" height="52" fill="#c6dff6" stroke="#b4d4f2" stroke-width="1"/>
<path d="M25,217.500 V244 L31,238.500 L35.500,248.500 L39.500,246.800 L35,237 L42.500,236.500Z" fill="#0a0a0a" stroke="#eef4fa" stroke-width="1.500"/>
<!-- component -->
<g transform="translate(84.500,230)"><path d="M-19,-9 L4,-22 L21,-11 L21,13 L-2,23 L-19,12Z M-19,-9 L-2,0 L21,-11 M-2,0 V23 M4,-22 V0 M-19,12 L4,0 L21,13" fill="none" stroke="#2f9ae2" stroke-width="2.200"/>
<g stroke="#3a3a36" stroke-width="1"><path d="M-5,-13 L3,-16 L10,-13 L10,-5 L2,-2 L-5,-5Z" fill="#6c6c64"/><path d="M-5,-13 L3,-16 L10,-13 L2,-10Z" fill="#d8d2bc"/><path d="M-15,-2 L-7,-5 L0,-2 L0,8 L-8,11 L-15,8Z" fill="#6c6c64"/><path d="M-15,-2 L-7,-5 L0,-2 L-8,1Z" fill="#d8d2bc"/><path d="M-8,1 L0,-2 L0,8 L-8,11Z" fill="#8a8a80"/><path d="M1,1 L9,-2 L16,1 L16,11 L8,14 L1,11Z" fill="#6c6c64"/><path d="M1,1 L9,-2 L16,1 L8,4Z" fill="#d8d2bc"/><path d="M8,4 L16,1 L16,11 L8,14Z" fill="#8a8a80"/></g>
<g fill="#2f9ae2"><circle cx="-19" cy="-9" r="2"/><circle cx="4" cy="-22" r="2"/><circle cx="21" cy="-11" r="2"/><circle cx="21" cy="13" r="2"/><circle cx="-2" cy="23" r="2"/><circle cx="-19" cy="12" r="2"/></g></g>
<!-- paint bucket -->
<g transform="translate(29,284)"><path d="M4,-8 C12,-14 20,-8 16,2" fill="none" stroke="#3a3a3a" stroke-width="2.200"/><path d="M-14,-6 L6,-16 L17,4 L17,10 L0,19 L-8,12Z" fill="#6e6a5a" stroke="#1e1e1e" stroke-width="1.600"/><path d="M-4,6 L8,0 L14,8 L2,15Z" fill="#e0d4a8"/><ellipse cx="-3" cy="-10" rx="11.500" ry="6.500" transform="rotate(-27 -3 -10)" fill="#a9bcc6" stroke="#1e1e1e" stroke-width="1.600"/><path d="M-12,-4 C-4,-2 4,-6 4,-3 C2,4 -6,4 -9,12 C-12,20 -18,18 -19,10 C-20,2 -16,-2 -12,-4Z" fill="#fbb616" stroke="#2a2008" stroke-width="1.500"/></g>
<!-- eraser -->
<g transform="translate(84,284)"><path d="M-18,8 L-12,-6 L8,-18 L19,-14 L12,2 L0,18Z" fill="#ff9cae" stroke="#2a2a2a" stroke-width="1.600"/><path d="M-18,8 L-12,-6 L3,-1 L0,18Z" fill="#ffb8c4" stroke="#2a2a2a" stroke-width="1.200"/><path d="M-12,-6 L8,-18 L19,-14 L3,-1Z" fill="#fa8ea4" stroke="#2a2a2a" stroke-width="1.200"/><path d="M3,-7 L11,-13" stroke="#c85a74" stroke-width="3" stroke-dasharray="1.500 1.200"/></g>
<!-- pencil -->
<g><path d="M14,365.500 L20,353 L27,360Z" fill="#caa878" stroke="#222" stroke-width="1.200"/><path d="M14,365.500 L16.500,360.500 L19,363Z" fill="#111"/><path d="M20,353 L43,331.500 L48.500,337 L27,360Z" fill="#dc2424" stroke="#3a1010" stroke-width="1.500"/><path d="M23.500,356.500 L46,334.500" stroke="#8a1414" stroke-width="1.200"/><path d="M41,333.500 L46.500,339" stroke="#e8c8c8" stroke-width="2"/></g>
<!-- freehand -->
<g fill="none"><path d="M68.500,366 C68.500,360 69,354 73.500,352.600 C79,351.500 84,361 89.300,364.700 C93,367 97,365 97.700,361 C98.500,355 94,351 88,348.500 C82,346 75,345 70.500,341 C67,337.500 69,335 73,335 C80,334.500 88,337 95,340.500 C99,342.500 103,343 105,340.500 C107,337.500 105,332 99.750,330" stroke="#f6bcbc" stroke-width="4.600"/><path d="M68.500,366 C68.500,360 69,354 73.500,352.600 C79,351.500 84,361 89.300,364.700 C93,367 97,365 97.700,361 C98.500,355 94,351 88,348.500 C82,346 75,345 70.500,341 C67,337.500 69,335 73,335 C80,334.500 88,337 95,340.500 C99,342.500 103,343 105,340.500 C107,337.500 105,332 99.750,330" stroke="#b02626" stroke-width="2.400"/><circle cx="68.500" cy="366" r="2.900" fill="#e62020"/><circle cx="99.750" cy="330" r="2.900" fill="#e62020"/></g>
<!-- rectangle -->
<g><rect x="16" y="385.500" width="29" height="33" fill="#9b9988" stroke="#55554c" stroke-width="1.200"/><path d="M17.500,417.800 L44,385.500" stroke="#e83030" stroke-width="3.600"/><path d="M17.500,417.800 L44,385.500" stroke="#fbd8d8" stroke-width="1.300"/><circle cx="17.500" cy="417.800" r="2.600" fill="#f02222"/><circle cx="44" cy="385.500" r="2.600" fill="#f02222"/></g>
<g><rect x="73.500" y="385.500" width="24" height="33" fill="#9b9988" stroke="#55554c" stroke-width="1.200"/><path d="M71,386 V417.500 H98" fill="none" stroke="#e83030" stroke-width="1.600"/><path d="M71,394 C86,394 97,404 98,417.500" fill="none" stroke="#e83030" stroke-width="3.400"/><path d="M71,394 C86,394 97,404 98,417.500" fill="none" stroke="#fbd8d8" stroke-width="1.200"/><circle cx="71" cy="386" r="2.400" fill="#f02222"/><circle cx="71" cy="394" r="2.400" fill="#f02222"/><circle cx="71" cy="417.500" r="2.400" fill="#f02222"/><circle cx="98" cy="417.500" r="2.400" fill="#f02222"/></g>
<!-- circle / polygon -->
<g><circle cx="30.700" cy="455.700" r="18" fill="#9b9988" stroke="#3c3c36" stroke-width="1.400"/><path d="M30.700,455.700 L43.500,443.500" stroke="#e83030" stroke-width="3.400"/><path d="M30.700,455.700 L43.500,443.500" stroke="#fbd8d8" stroke-width="1.200"/><circle cx="30.700" cy="455.700" r="2.800" fill="#f02222"/><circle cx="43.500" cy="443.500" r="2.400" fill="#f02222"/></g>
<g><path d="M85,437.500 L102,449 L96.500,470 L75,471 L67.500,450.500Z" fill="#9b9988" stroke="#3c3c36" stroke-width="1.400" transform="rotate(12 85 455.700)"/><circle cx="85" cy="455.700" r="18.400" fill="none" stroke="#e83a3a" stroke-width="1.300"/><path d="M85,455.700 L98,443.500" stroke="#e83030" stroke-width="3.400"/><path d="M85,455.700 L98,443.500" stroke="#fbd8d8" stroke-width="1.200"/><circle cx="85" cy="455.700" r="2.800" fill="#f02222"/><circle cx="98" cy="443.500" r="2.400" fill="#f02222"/></g>
<!-- arcs -->
<g fill="none"><path d="M16,494 H47.200 L16,525.400" stroke="#e83030" stroke-width="1.500"/><path d="M47.200,494 C47,512 34,524 16,525.400" stroke="#333" stroke-width="1.700"/><g fill="#f02222"><circle cx="16" cy="494" r="2.600"/><circle cx="47.200" cy="494" r="2.600"/><circle cx="16" cy="525.400" r="2.600"/></g></g>
<g fill="none"><path d="M76,525.400 C64,516 66,500 74.400,498.200 C82,490 96,490 101.600,498.700" stroke="#333" stroke-width="1.700"/><path d="M74.400,498.200 L88,511 M76,525.400 L101.600,498.700" stroke="#e83030" stroke-width="1.500"/><g fill="#f02222"><circle cx="74.400" cy="498.200" r="2.600"/><circle cx="101.600" cy="498.700" r="2.600"/><circle cx="76" cy="525.400" r="2.600"/></g></g>
<g fill="none"><path d="M27,548.500 C44,546 56,562 45,577 C36,584 24,580 17,569" stroke="#333" stroke-width="1.700"/><path d="M27,548.500 L45,577 L17,569" stroke="#e83030" stroke-width="1.500"/><g fill="#f02222"><circle cx="27" cy="548.500" r="2.600"/><circle cx="45" cy="577" r="2.600"/><circle cx="17" cy="569" r="2.600"/></g></g>
<g><path d="M69.500,550 H99 C98,566 86,577 69.500,578Z" fill="#9b9988" stroke="#3c3c36" stroke-width="1.200"/><path d="M69.500,550 H99 M69.500,578 L99,550" stroke="#e83030" stroke-width="3.200"/><path d="M69.500,578 L99,550" stroke="#fbd8d8" stroke-width="1.100"/><g fill="#f02222"><circle cx="69.500" cy="550" r="2.400"/><circle cx="99" cy="550" r="2.400"/><circle cx="69.500" cy="578" r="2.400"/></g></g>
<!-- move -->
<g transform="translate(30.700,627)" fill="#f01c1c" stroke="#7a1010" stroke-width=".8"><path id="mv" d="M0,-18 L7,-8 L3,-8 L3,-3 L-3,-3 L-3,-8 L-7,-8Z"/><use href="#mv" transform="rotate(90)"/><use href="#mv" transform="rotate(180)"/><use href="#mv" transform="rotate(270)"/><path d="M-2,-2 L2,2 M2,-2 L-2,2" stroke="#fff" stroke-width="1.500"/></g>
<!-- pushpull -->
<g transform="translate(84.600,627)"><path d="M-19,3 L0,-5 L19,3 L0,12Z" fill="#a5a392" stroke="#2a2a26" stroke-width="1.300"/><path d="M-19,3 L0,12 L0,18 L-19,8Z" fill="#55554c" stroke="#2a2a26" stroke-width="1.300"/><path d="M19,3 L0,12 L0,18 L19,8Z" fill="#77776c" stroke="#2a2a26" stroke-width="1.300"/><path d="M0,-17 L7.500,-7 L3.500,-7 L3.500,4 L-3.500,4 L-3.500,-7 L-7.500,-7Z" fill="#f01c1c" stroke="#6a1414" stroke-width="1"/></g>
<!-- rotate -->
<g transform="translate(30.700,681.300)" fill="#ee1c1c" stroke="#8a1212" stroke-width=".8"><path d="M-15,-3 C-12,-15 4,-18 12,-9 L16,-13 L17,2 L3,-1 L7,-5 C2,-10 -6,-9 -8,-3Z"/><path d="M15,3 C12,15 -4,18 -12,9 L-16,13 L-17,-2 L-3,1 L-7,5 C-2,10 6,9 8,3Z"/></g>
<!-- follow me -->
<g transform="translate(84.600,681)"><path d="M-16,4 C-17,-10 -2,-18 10,-15 L18,-10 L17,2 L9,-3 C2,-5 -6,0 -6,8 L-2,16 L-10,14Z" fill="#8a887a" stroke="#1e1e1e" stroke-width="2"/><path d="M10,-15 L9,-3 M2,-15 L2,-4 M-8,-10 L-3,-1" stroke="#1e1e1e" stroke-width="1.300"/><path d="M-9,-1 C-6,-9 2,-11 8,-8 L10,-11 L12,-1 L2,-1 L5,-4 C1,-5 -3,-3 -4,1Z" fill="#ee1c1c" stroke="#7a1010" stroke-width=".8"/><path d="M-5,5 L4,4 L3,7 L9,7 L7,14 L-1,13 L1,10 L-4,10Z" fill="#ee1c1c" stroke="#7a1010" stroke-width=".8"/></g>
<!-- scale -->
<g><rect x="13" y="715.600" width="37.500" height="37.500" fill="none" stroke="#e83030" stroke-width="1.400"/><rect x="13" y="725" width="29.500" height="28.400" fill="#9b9988" stroke="#3c3c36" stroke-width="1.300"/><path d="M51,716 L49,730 L45,726 L36,736 L30.500,730.500 L40,721.500 L36,717.500Z" fill="#f01c1c" stroke="#fff" stroke-width="1.200"/></g>
<!-- offset -->
<g fill="none"><path d="M68,719 C84,709 102,722 103,750" stroke="#e82828" stroke-width="2"/><path d="M70,735 C78,728 86,730 89,737" stroke="#333" stroke-width="2"/><path d="M86,749 C90,745 92,742 92,738" stroke="#333" stroke-width="1.800"/><path d="M100,719 L98,733 L94,729 L86,739 L80.500,733.500 L89,725 L85,721Z" fill="#f01c1c" stroke="#7a1010" stroke-width=".8"/></g>
<!-- tape -->
<g transform="translate(31,798)"><path d="M-15,7 L-2,1 L2,8 L-12,15Z" fill="#f2d21c" stroke="#1e1e1e" stroke-width="1.600"/><path d="M-16,9 L-12,16" stroke="#111" stroke-width="3.500"/><path d="M-3,-9 L8,-17 L17,-14 L16,-2 L5,7 L-3,4Z" fill="#5a5a52" stroke="#1e1e1e" stroke-width="1.600"/><ellipse cx="7.500" cy="-5" rx="5.500" ry="8" transform="rotate(28 7.500 -5)" fill="#f4dc1c" stroke="#2a2a1e" stroke-width="1.200"/></g>
<!-- dimension -->
<g transform="translate(85,798)" fill="none" stroke="#1e1e1e" stroke-width="1.400"><path d="M-11,4 L3,-12 M-15,0 L-7,8 M-1,-16 L7,-8 M-11,4 L1,16 M3,-12 L14,0"/><circle cx="1" cy="16" r="1.800" fill="#22b022" stroke="none"/><circle cx="14.500" cy="0" r="1.800" fill="#22b022" stroke="none"/><path d="M-14,-13 c3,-3 7,0 4,3 c4,0 3,6 -2,5" stroke-width="1.300"/><path d="M-13,2 l4,4 M1,-14 l4,4" stroke-width="2.600"/></g>
<!-- protractor -->
<g transform="translate(31,851)"><path d="M-15,10 C-16,-6 -2,-14 17,-12 L2,16Z" fill="#f0d41c" stroke="#2a2a14" stroke-width="1.800"/><path d="M-8,7 C-8,-2 0,-7 9,-7 L0,9Z" fill="#f1f1f1" stroke="#2a2a14" stroke-width="1.300"/><path d="M-13,2 l3,1 M-11,-4 l3,2 M-6,-8 l2,3 M1,-11 l1,3 M8,-12 l0,3" stroke="#2a2a14" stroke-width="1"/></g>
<!-- text -->
<g><rect x="76.500" y="835.500" width="26" height="22.500" fill="#fff" stroke="#1e1e1e" stroke-width="1.400"/><path d="M76.500,847 H72.500 V864" fill="none" stroke="#1e1e1e" stroke-width="1.400"/><path d="M69.500,862 H75.500 L72.500,869Z" fill="#111" stroke="#111"/><text x="80" y="853" font-family="Liberation Serif" font-size="15" fill="#111" stroke="none" textLength="19" lengthAdjust="spacingAndGlyphs">A1</text></g>
<!-- axes -->
<g transform="translate(28,908)"><path d="M0,0 V17" stroke="#3a6ad8" stroke-width="1.400" stroke-dasharray="1.500 2"/><path d="M0,0 L-11,-6" stroke="#e83a3a" stroke-width="1.300"/><path d="M0,0 L-12,7" stroke="#3aa83a" stroke-width="1.300"/><path d="M0,0 V-12" stroke="#1a4ab8" stroke-width="2.400"/><path d="M0,-19 L4,-10 H-4Z" fill="#1a4ab8" stroke="#1a4ab8"/><path d="M0,0 L11,-6" stroke="#2aa02a" stroke-width="2.200"/><path d="M17,-9.500 L8,-9 L11,-3.500Z" fill="#2aa02a" stroke="#2aa02a"/><path d="M0,0 L11,7" stroke="#e02020" stroke-width="2.200"/><path d="M17,11 L8,10 L11.500,4.500Z" fill="#e02020" stroke="#e02020"/><circle r="2.600" fill="#111"/></g>
<!-- 3d text -->
<g transform="translate(85,906)"><path d="M-12,12 L-3,-17 L4,-17 L16,14 L9,16 L6,8 L-3,8 L-5,14Z" fill="#4a4a42" stroke="#1a1a1a" stroke-width="1.500"/><path d="M-15,9 L-6,-19 L1,-19 L12,11 L6,12 L3,4 L-6,4 L-8,11Z" fill="#8c8a7c" stroke="#1a1a1a" stroke-width="1.500"/><path d="M-4,-2 L-2,-10 L1,-2Z" fill="#f1f1f1" stroke="#1a1a1a" stroke-width="1"/></g>
<!-- orbit -->
<g fill="none"><path d="M35.500,960.800 C50,960 51.500,976 39,979.300" stroke="#2c9650" stroke-width="6.500"/><path d="M35.500,960.300 C43,959.500 47,963 47.800,967.500" stroke="#86cca6" stroke-width="4.600"/><path d="M41,974.500 L33.500,981.500 L42.500,984.500Z" fill="#2c9650" stroke="#1a6a36" stroke-width=".8"/><path d="M26,960.800 C12,962 11,977.500 31,977.300" stroke="#da2828" stroke-width="6.500"/><path d="M26,960.300 C18,961 14.500,965 14.800,969" stroke="#e07a66" stroke-width="4.600"/><path d="M30.500,971 L39.500,977.300 L30.500,983.500Z" fill="#da2828" stroke="#8a1818" stroke-width=".8"/><path d="M30.600,950 V989.500" stroke="#111" stroke-width="2.600"/></g>
<!-- pan -->
<g><path d="M68,980 L76.500,962 C78.500,957 84,953 90,952.200 L96,952 C99.500,953 101.500,955 101.500,958 L93,972 C96,974.500 100.500,974 101,977 C100,980 96,981 92,982 C88,983 84,984.500 80,987.500 L72.500,988 C69,986.500 67.500,983 68,980Z" fill="#f8e4b4" stroke="#b8a474" stroke-width="1.500"/><path d="M85,958.500 l6,-5.500 M89,960.500 l6.500,-6 M93,962.500 l5.500,-5" stroke="#b0a070" stroke-width="1.400" fill="none"/></g>
<!-- zoom -->
<g id="mag"><path d="M15.500,1039 L27,1027.500" stroke="#1a1a1a" stroke-width="5.500"/><circle cx="37.300" cy="1017.500" r="10.600" fill="#8ab8e8" stroke="#1a1a1a" stroke-width="2.400"/><circle cx="35.500" cy="1015" r="5.500" fill="#b4d4f4" opacity=".8"/></g>
<rect x="69" y="1008.500" width="33.500" height="32.500" fill="none" stroke="#f03030" stroke-width="2.400"/>
<use href="#mag" x="54" y="0.500"/>
<!-- zoom extents -->
<g><path d="M15.500,1094 L25,1083" stroke="#1a1a1a" stroke-width="5"/><circle cx="32" cy="1075.400" r="10" fill="#8ab8e8" stroke="#1a1a1a" stroke-width="2.200"/><g fill="#f01c1c" stroke="#7a1010" stroke-width=".6"><path d="M14,1060 L24,1062.500 L21.500,1065 L25.500,1069 L23,1071.500 L19,1067.500 L16.500,1070Z"/><path d="M51,1060 L48.500,1070 L46,1067.500 L42,1071.500 L39.500,1069 L43.500,1065 L41,1062.500Z"/><path d="M51,1094.500 L41,1092 L43.500,1089.500 L39.500,1085.500 L42,1083 L46,1087 L48.500,1084.500Z"/></g></g>
<!-- previous -->
<g><circle cx="77" cy="1075.400" r="9.500" fill="#8ab8e8" stroke="#1a1a1a" stroke-width="2.200"/><path d="M68.500,1070 L79,1060 L79,1065.500 C91,1063 100,1071 97,1084 C94,1076 89,1074 79,1075 L79,1080.500Z" fill="#2a8ae8" stroke="#124a98" stroke-width="1.200"/><path d="M85,1081 L101,1094" stroke="#1a1a1a" stroke-width="5.500"/></g>
<!-- position camera -->
<g transform="translate(31.300,1140)"><path d="M-7,13 L7,19 M7,13 L-7,19" stroke="#f04040" stroke-width="1.500"/><path d="M0,-17 C2.500,-17 3,-13 1.500,-12 C5,-11 5,-4 5.500,2 L3.500,2 L3,12 L-3,12 L-3.500,2 L-5.500,2 C-5,-4 -5,-11 -1.500,-12 C-3,-13 -2.500,-17 0,-17Z" fill="#fcfcfc" stroke="#2a2a2a" stroke-width="1.300"/><path d="M0,3 V11" stroke="#2a2a2a" stroke-width="1"/></g>
<!-- look around eye -->
<g transform="translate(85,1141)"><path d="M-17,-2 C-10,-14 8,-15 17,-3" fill="none" stroke="#1a1a1a" stroke-width="3.200"/><path d="M-16,3 C-8,-8 8,-8 16,2 C8,10 -8,11 -16,3Z" fill="#f8f8f8" stroke="#333" stroke-width="1.300"/><circle cx="-1" cy="1" r="6.500" fill="#1a1a1a"/><circle cx="-3" cy="-1.500" r="1.800" fill="#fff"/><path d="M-12,9 C-4,14 6,13 13,8" fill="none" stroke="#aaa" stroke-width="1.300"/></g>
<!-- walk -->
<g fill="#111"><ellipse cx="21.500" cy="1190" rx="6.500" ry="10" transform="rotate(-8 21.500 1190)"/><ellipse cx="23" cy="1206.500" rx="4.800" ry="4.800"/><ellipse cx="39.500" cy="1188" rx="6.500" ry="10" transform="rotate(14 39.500 1188)"/><ellipse cx="35" cy="1204" rx="4.800" ry="4.800"/><path d="M15.500,1199 H29 M32,1196 L44,1199.500" stroke="#f1f1f1" stroke-width="1.600"/></g>
<!-- section -->
<g transform="translate(84.500,1194)"><circle r="10.500" fill="#fff" stroke="#111" stroke-width="1.800"/><path d="M-17,0 H12" stroke="#111" stroke-width="2"/><path d="M0,-16 L17,0 L0,16" fill="none" stroke="#111" stroke-width="2.400"/><path d="M9,-8 L17,0 L9,8Z" fill="#111"/><path d="M0,-16 L7,-10 L0,-10Z M0,16 L7,10 L0,10Z" fill="#111"/><text x="-4" y="-2" font-family="Liberation Sans" font-size="7" fill="#111">1</text><text x="-6" y="8" font-family="Liberation Sans" font-size="7" fill="#111">A5</text></g>
<!-- warehouse icons -->
<g fill="none" stroke="#1f6db2" stroke-width="3">
<g transform="translate(31,1259)"><path d="M-15,-8 L-1,-17 L13,-8 L13,6 L-1,15 L-15,6Z"/><path d="M-9,-5 L-1,-10 L7,-5 L7,4 L-1,9 L-9,4Z" stroke-width="2.400"/><path d="M-1,-4 L3,-2 V2 L-1,4 L-5,2 V-2Z M-1,0 V4 M-5,-2 L-1,0 L3,-2" stroke-width="1.100"/><path d="M11,-2 V8 H8 L14.500,17 L21,8 H18 V-2Z" fill="#f1f1f1" stroke-width="2"/></g>
<g transform="translate(85,1259)"><path d="M-16,-15 C-8,3 8,3 16,-15 M-16,13 C-8,-5 8,-5 16,13" stroke-width="6" stroke-linecap="butt"/><path d="M-15,-8 C-8,5 8,5 17,-11 M-15,18 C-9,6 -3,2 2,2" stroke-width="1.800" stroke="#5c9ad0"/><circle cx="13" cy="10" r="8.500" fill="#f1f1f1" stroke-width="2.200"/><path d="M9,9 a4,4 0 0 1 7,-2 M17,11 a4,4 0 0 1 -7,2" stroke-width="1.500"/></g>
<g transform="translate(31,1313)"><path d="M-15,-9 L-3,-16 L10,-9 L-3,-2Z" stroke-width="2.600"/><ellipse cx="-3" cy="-9" rx="4" ry="2" stroke-width="1.600"/><path d="M-15,-3 L-3,4 L10,-3 M-15,3 L-3,10 L4,6 M-15,9 L-3,16 L2,13" stroke-width="2.800"/><path d="M5,3 H14 V-1 L22,7 L14,15 V11 H5Z" fill="#f1f1f1" stroke-width="2"/></g>
<g transform="translate(85,1313)"><path d="M-16,-15 C-8,3 8,3 16,-15 M-16,13 C-8,-5 8,-5 16,13" stroke-width="6" stroke-linecap="butt"/><path d="M-15,-8 C-8,5 8,5 17,-11 M-15,18 C-9,6 -3,2 2,2" stroke-width="1.800" stroke="#5c9ad0"/><circle cx="13" cy="11" r="9" fill="#f1f1f1" stroke="#f1f1f1" stroke-width="2"/><circle cx="13" cy="11" r="8.200" fill="none" stroke-width="2.600" stroke-dasharray="3.200 3.240" stroke="#4a8cc8"/><circle cx="13" cy="11" r="6" fill="#e4f0fa" stroke-width="2" stroke="#4a8cc8"/><circle cx="13" cy="11" r="2.600" fill="#f1f1f1" stroke-width="1.800" stroke="#4a8cc8"/></g>
</g>
</svg>
<div class="a" id="vpb"></div>
<div class="a" id="vp">
<svg class="a" style="left:0;top:0" width="2028" height="1143" viewBox="117 193 2028 1143">
<defs>
<filter id="nz" x="0" y="0" width="100%" height="100%"><feTurbulence type="fractalNoise" baseFrequency="0.12" numOctaves="2" seed="3" result="n"/><feColorMatrix in="n" type="matrix" values="0 0 0 0 0.3  0 0 0 0 0.36  0 0 0 0 0.46  0.9 0.9 0 0 -0.78"/><feComposite in2="SourceGraphic" operator="in"/></filter>
</defs>
<!-- axes behind -->
<line x1="665.5" y1="193" x2="631" y2="348" stroke="#5fc35f" stroke-width="2"/>
<line x1="115.6" y1="430.5" x2="366.7" y2="899.1" stroke="#4a4abc" stroke-width="1.5"/>
<!-- faces -->
<polygon points="366.7,899.1 1895.5,841.7 1798.2,1033.3 466.2,1088.1" fill="#d7d7d7"/>
<polygon points="521.3,352.5 1677.9,319.2 1895.5,841.7 366.7,899.1" fill="#e5e5e5"/>
<polygon points="546.3,370 1656.2,337.9 1604.1,540.7 606.7,572.1" fill="#d4d4d4"/>
<polygon points="546.3,370 606.7,572.1 547.9,862.3 414,867.4" fill="#5a5a5a"/>
<polygon points="1656.2,337.9 1846,814.6 1693.5,820.2 1604.1,540.7" fill="#626262"/>
<polygon points="606.7,572.1 1604.1,540.7 1693.5,820.2 547.9,862.3" fill="#2f3a4d"/>
<polygon points="606.7,572.1 1604.1,540.7 1693.5,820.2 547.9,862.3" fill="#556070" filter="url(#nz)" opacity=".16"/>
<!-- inner thin edges -->
<g fill="none" stroke="#1c1c1c" stroke-width="1.4" stroke-linejoin="round">
<polyline points="414,867.4 546.3,370 1656.2,337.9 1846,814.6"/>
<polyline points="546.3,370 606.7,572.1 547.9,862.3"/>
<polyline points="1656.2,337.9 1604.1,540.7 1693.5,820.2"/>
</g>
<line x1="606.7" y1="572.1" x2="1604.1" y2="540.7" stroke="#20283a" stroke-width="1.6"/>
<line x1="414" y1="867.4" x2="1846" y2="814.6" stroke="#161616" stroke-width="2.4"/>
<line x1="366.7" y1="899.1" x2="1895.5" y2="841.7" stroke="#6a6e72" stroke-width="1.6" stroke-dasharray="38 30"/>
<line x1="366.7" y1="899.1" x2="1895.5" y2="841.7" stroke="#9a9ea2" stroke-width="1.2"/>
<!-- outer thick edges -->
<g fill="none" stroke="#101010" stroke-width="2.7" stroke-linejoin="miter" stroke-linecap="round">
<polyline points="366.7,899.1 521.3,352.5 1677.9,319.2 1895.5,841.7 1798.2,1033.3"/>
<line x1="466.2" y1="1088.1" x2="1798.2" y2="1033.3"/>
</g>
<!-- red axis -->
<line x1="466.2" y1="1088.6" x2="1798.2" y2="1033.8" stroke="#c01818" stroke-width="1.6" opacity=".8"/>
<line x1="1798.2" y1="1033.5" x2="2146" y2="1019.2" stroke="#e04a42" stroke-width="2"/>
<!-- blue axis on edge -->
<line x1="366.7" y1="899.1" x2="466.2" y2="1088.1" stroke="#1c1e86" stroke-width="3" stroke-linecap="round"/>
<!-- dotted axes -->
<line x1="115" y1="1102.6" x2="466.2" y2="1088.1" stroke="#e07070" stroke-width="1.5" stroke-dasharray="2 4"/>
<line x1="466.2" y1="1088.1" x2="412" y2="1335" stroke="#7cc47c" stroke-width="1.4" stroke-dasharray="2 4"/>
<line x1="466.2" y1="1088.1" x2="596" y2="1335" stroke="#8a8ad8" stroke-width="1.5" stroke-dasharray="2 4"/>
<!-- bounding box dotted -->
<g fill="none" stroke="#3e3e3e" stroke-width="2.3" stroke-dasharray="2.4 2.7">
<polygon points="482.5,302.1 1712.5,267.9 1974.7,847.4 1837.2,1088.4 427.2,1147.6 288.8,912.7"/>
<line x1="288.8" y1="912.7" x2="1974.7" y2="847.4"/>
</g>
<!-- cursor -->
<path d="M583.8,976.8 l0,24.5 l5.6,-5.2 l4.2,9.6 l3.6,-1.6 l-4.2,-9.4 l7.6,-0.4 z" fill="#111" stroke="#f4f4f4" stroke-width="1.3" stroke-linejoin="round"/>
</svg>
</div>
<div class="a" id="rp"></div>
<div class="a" style="left:2145px;top:191px;width:7px;height:1145px;background:#f8f8f8"></div>
<div class="a" style="left:2152px;top:191px;width:408px;height:34px;background:linear-gradient(#c3d1e3,#d3e0ef 55%,#dde9f6)"></div>
<div class="t" style="left:2157.2px;top:200.59px;font-size:17.5px;color:#3a3a3a;transform:scaleX(0.9697)">Výchozí zásobník</div>
<svg class="a" style="left:2518px;top:201px" width="14" height="16" viewBox="0 0 14 16"><path d="M4,2 H10 V3.500 H9 V8 H11 V9.500 H7.600 V14 H6.400 V9.500 H3 V8 H5 V3.500 H4Z" fill="#1a1a1a"/><rect x="7.300" y="3.500" width="1.700" height="4.500" fill="#888"/></svg>
<div class="a" style="left:2541px;top:201px;width:16px;height:15px;background:#dc4a3c"></div>
<svg class="a" style="left:2541px;top:201px" width="16" height="15" viewBox="0 0 16 15"><path d="M4.500,4 L11.500,11 M11.500,4 L4.500,11" stroke="#fff" stroke-width="2.200"/></svg>
<!-- scrollbar -->
<div class="a" style="left:2534px;top:228px;width:26px;height:1108px;background:#f0f0f0"></div>
<div class="a" style="left:2536px;top:255px;width:24px;height:25px;background:#cdcdcd"></div>
<svg class="a" style="left:2538px;top:234px" width="20" height="14" viewBox="0 0 20 14"><path d="M3.500,11 L10,4.500 L16.500,11" fill="none" stroke="#444" stroke-width="2.200"/></svg>
<svg class="a" style="left:2537px;top:1317px" width="20" height="14" viewBox="0 0 20 14"><path d="M3.500,3.500 L10,10 L16.500,3.500" fill="none" stroke="#444" stroke-width="2.200"/></svg>
<!-- section headers -->
<div class="sh" style="left:2152px;top:228px"><div class="x"></div></div>
<div class="sh" style="left:2152px;top:537px"><div class="x"></div></div>
<div class="sh" style="left:2152px;top:1085px"><div class="x"></div></div>
<div class="sh" style="left:2152px;top:1116px"><div class="x"></div></div>
<div class="sh" style="left:2152px;top:1146px"><div class="x"></div></div>
<svg class="a" style="left:2152px;top:228px" width="382" height="950" viewBox="2152 228 382 950">
<g fill="#111"><path d="M2164.500,237 H2176 L2170.200,246.500Z"/><path d="M2164.500,546 H2176 L2170.200,555.500Z"/><path d="M2165.500,1092 L2174.500,1098 L2165.500,1104Z"/><path d="M2165.500,1123 L2174.500,1129 L2165.500,1135Z"/><path d="M2164.500,1154.500 H2176 L2170.200,1164Z"/></g>
<g stroke="#222" stroke-width="2.200"><path id="xx" d="M2516.500,238 L2524.500,246 M2524.500,238 L2516.500,246"/><use href="#xx" y="309"/><use href="#xx" y="857"/><use href="#xx" y="888"/><use href="#xx" y="918"/></g>
</svg>
<div class="t" style="left:2186.8px;top:232.96px;font-size:18px;color:#333;transform:scaleX(1.0586)">Informace o prvku</div>
<div class="t" style="left:2186.9px;top:542.56px;font-size:18px;color:#333;transform:scaleX(1.0817)">Materiály</div>
<div class="t" style="left:2186.5px;top:1090.06px;font-size:18px;color:#333;transform:scaleX(1.0734)">Komponenty</div>
<div class="t" style="left:2186.5px;top:1120.76px;font-size:18px;color:#333;transform:scaleX(1.0124)">Styly</div>
<div class="t" style="left:2186.5px;top:1151.36px;font-size:18px;color:#333;transform:scaleX(1.0081)">Značky</div>
<div class="t" style="left:2166.3px;top:269.83px;font-size:15.2px;color:#1a1a1a;font-weight:bold;transform:scaleX(1.1438)">Bez výběru</div>
<div class="a" style="left:2157px;top:298px;width:376px;height:2px;background:#bcbcbc"></div>
<div class="a" style="left:2157px;top:300px;width:376px;height:1px;background:#fafafa"></div>
<!-- materials -->
<div class="a" style="left:2155px;top:569px;width:98px;height:110px;background:#ececec;border:1px solid #c4c4c4"></div>
<div class="a" style="left:2156px;top:576px;width:96px;height:95px;background:#2e3749"></div>
<svg class="a" style="left:2156px;top:576px" width="96" height="95"><filter id="n2"><feTurbulence type="fractalNoise" baseFrequency="0.25" numOctaves="2" seed="7"/><feColorMatrix type="matrix" values="0 0 0 0 0.3  0 0 0 0 0.36  0 0 0 0 0.46  0.5 0.5 0 0 -0.5"/></filter><rect width="96" height="95" filter="url(#n2)"/><path d="M80,92 L93,79 V92Z" fill="#f4f4f4"/></svg>
<div class="a" style="left:2257px;top:569px;width:237px;height:30px;background:#fff;border:1px solid #b4b4b4;border-bottom-color:#8c8c8c"></div>
<div class="t" style="left:2265px;top:575.96px;font-size:15.4px;color:#333;transform:scaleX(1.0530)">Břidlicová modrá</div>
<svg class="a" style="left:2496px;top:570px" width="38" height="150" viewBox="2496 570 38 150" stroke-linejoin="round">
<rect x="2508" y="574.500" width="15" height="9.500" fill="#f6f6f6" stroke="#ddd" stroke-width=".6"/><path d="M2510.500,576.500 H2520.500 L2515.500,582Z" fill="#0a0a0a"/><rect x="2508" y="585" width="15" height="11" fill="#0a0a0a"/><path d="M2515.500,587 V594 M2512,590.500 H2519" stroke="#fff" stroke-width="2.200"/>
<g><path d="M2504,622 L2516,612 L2528,616 L2528,630 L2517,638 L2504,634Z" fill="#1a1a16" stroke="#111" stroke-width="1"/><path d="M2504,622 L2516,612 L2528,616 L2517,626Z" fill="#d8d0a8" stroke="#111" stroke-width="1.200"/><path d="M2507,621 L2518,613 M2510.500,623 L2522,614.500 M2514,625 L2525.500,616" stroke="#111" stroke-width="1.600"/><circle cx="2507.500" cy="631" r="6.300" fill="#fff" stroke="#111" stroke-width="1.400"/><path d="M2507.500,627.500 V634.500 M2504,631 H2511" stroke="#111" stroke-width="1.500"/></g>
<rect x="2499" y="645.500" width="32.500" height="33" fill="#fff"/><path d="M2499,645.500 L2531.500,678.500 H2499Z" fill="#a2b4c6"/>
<g><path d="M2503.500,718 L2506,712 L2518,700 L2521,703 L2509,715Z" fill="#d8a028" stroke="#4a3a10" stroke-width="1"/><path d="M2516,698 L2523,705" stroke="#222" stroke-width="3"/><path d="M2519,700 L2525,694 C2528,691 2531,694 2528,697 L2522,703Z" fill="#333" stroke="#111" stroke-width="1"/></g>
</svg>
<div class="a" style="left:2152px;top:683px;width:382px;height:1.500px;background:#c2c2c2"></div>
<div class="a" style="left:2152px;top:684.500px;width:382px;height:1.500px;background:#fbfbfb"></div>
<!-- tabs -->
<div class="a" style="left:2152px;top:696px;width:65px;height:30px;background:#fff"></div>
<div class="a" style="left:2217px;top:697px;width:62px;height:28px;border:1px solid #dadada;border-bottom:none;background:#f0f0f0"></div>
<div class="t" style="left:2160.8px;top:700.66px;font-size:16px;color:#333;transform:scaleX(1.0470)">Vybrat</div>
<div class="t" style="left:2224.2px;top:702.86px;font-size:16px;color:#333;transform:scaleX(0.9924)">Upravit</div>
<div class="a" style="left:2155px;top:725px;width:379px;height:47px;background:#f7f7f7;border-top:1px solid #d8d8d8;border-bottom:1px solid #c4c4c4"></div>
<div class="a" style="left:2152px;top:725px;width:65px;height:2px;background:#fff"></div>
<svg class="a" style="left:2160px;top:730px" width="375" height="40" viewBox="2160 730 375 40" stroke-linejoin="round">
<path d="M2168,746.500 L2177,737.500 V742.500 H2185.500 V750.500 H2177 V755.500Z" fill="#fff" stroke="#1a1a1a" stroke-width="2"/>
<path d="M2220.500,746.500 L2211.500,737.500 V742.500 H2204 V750.500 H2211.500 V755.500Z" fill="#fafafa" stroke="#aaa" stroke-width="1.700"/>
<path d="M2236.500,747 L2248,735.500 L2259.500,747 M2239.500,745 V758.500 H2256.500 V745" fill="#fff" stroke="#111" stroke-width="2.200"/><rect x="2245" y="749" width="6" height="9.500" fill="#111"/><rect x="2253" y="736.500" width="3" height="5" fill="#111"/>
<path d="M2511,737.500 H2519 V752.500 H2511Z" fill="#dce8f8" stroke="#222" stroke-width="1.300"/><rect x="2511" y="737.500" width="8" height="4" fill="#4a86d8"/><path d="M2517,736 L2528,746.500 L2517,757.500Z" fill="#0a0a0a"/>
</svg>
<div class="a" style="left:2269px;top:733px;width:230px;height:35px;background:#fff;border:1px solid #8c8c8c"></div>
<div class="t" style="left:2275.4px;top:743.26px;font-size:16px;color:#333;transform:scaleX(1.0059)">Koberec, tkaniny, kůže, te</div>
<div class="a" style="left:2459px;top:740px;width:12px;height:22px;overflow:hidden"><div class="t" style="left:0;top:3.200px;font-size:16px;color:#333">x</div></div>
<div class="a" style="left:2464.500px;top:740px;width:9px;height:22px;background:#fff"></div>
<svg class="a" style="left:2477px;top:744px" width="16" height="14" viewBox="0 0 16 14"><path d="M2.500,4 L8,9.500 L13.500,4" fill="none" stroke="#555" stroke-width="1.500"/></svg>
<!-- swatch grid -->
<div class="a" style="left:2155px;top:772px;width:355px;height:304px;background:#fff"></div>
<div class="a" style="left:2510px;top:772px;width:24px;height:304px;background:#f0f0f0"></div>
<div class="a" style="left:2511px;top:800px;width:23px;height:24px;background:#cdcdcd"></div>
<svg class="a" style="left:2512px;top:778px" width="20" height="14" viewBox="0 0 20 14"><path d="M4,10.500 L10,4.500 L16,10.500" fill="none" stroke="#555" stroke-width="2"/></svg>
<svg class="a" style="left:2512px;top:1053px" width="20" height="14" viewBox="0 0 20 14"><path d="M4,4 L10,10 L16,4" fill="none" stroke="#555" stroke-width="2"/></svg>
<svg class="a" style="left:2155px;top:772px" width="355" height="304" viewBox="2155 772 355 304">
<defs>
<filter id="sn" x="0" y="0" width="100%" height="100%"><feTurbulence type="fractalNoise" baseFrequency="0.45" numOctaves="2" seed="11"/><feColorMatrix type="matrix" values="0 0 0 0 1  0 0 0 0 1  0 0 0 0 1  1.6 1.6 0 0 -1.55"/></filter>
<filter id="sd" x="0" y="0" width="100%" height="100%"><feTurbulence type="fractalNoise" baseFrequency="0.45" numOctaves="2" seed="5"/><feColorMatrix type="matrix" values="0 0 0 0 0  0 0 0 0 0  0 0 0 0 0  1.6 1.6 0 0 -1.55"/></filter>
<pattern id="pd" width="24.300" height="24.300" patternUnits="userSpaceOnUse" x="2408.600" y="777.500"><rect width="24.300" height="24.300" fill="#2a2318"/><path d="M0,12.150 L12.150,0 L24.300,12.150 L12.150,24.300Z" fill="none" stroke="#6a5a38" stroke-width="2.500"/><path d="M12.150,5.500 L18.800,12.150 L12.150,18.800 L5.500,12.150Z" fill="#d4b860"/><rect x="10" y="10" width="4.300" height="4.300" fill="#8a7030"/></pattern>
<pattern id="pb" width="4" height="4" patternUnits="userSpaceOnUse"><rect width="4" height="4" fill="#c9a456"/><path d="M0,1 H4 M1,0 V4" stroke="#a07c34" stroke-width="1"/></pattern>
<g id="cell"><rect x="-3" y="-3" width="79" height="79" fill="#e6e6e6" stroke="#c9c9c9" stroke-width="1"/></g>
</defs>
<g><use href="#cell" x="2162.700" y="777.500"/><use href="#cell" x="2245" y="777.500"/><use href="#cell" x="2327" y="777.500"/><use href="#cell" x="2408.600" y="777.500"/><use href="#cell" x="2162.700" y="859.500"/><use href="#cell" x="2245" y="859.500"/><use href="#cell" x="2327" y="859.500"/><use href="#cell" x="2408.600" y="859.500"/><use href="#cell" x="2162.700" y="941.500"/><use href="#cell" x="2245" y="941.500"/><use href="#cell" x="2327" y="941.500"/><use href="#cell" x="2408.600" y="941.500"/><use href="#cell" x="2162.700" y="1023.500"/><use href="#cell" x="2245" y="1023.500"/><use href="#cell" x="2327" y="1023.500"/><use href="#cell" x="2408.600" y="1023.500"/></g>
<!-- row1 -->
<rect x="2162.700" y="777.500" width="73" height="73" fill="#2b3a54"/>
<rect x="2245" y="777.500" width="73" height="73" fill="#9c8676"/><rect x="2245" y="777.500" width="73" height="73" filter="url(#sn)" opacity=".55"/><rect x="2245" y="777.500" width="73" height="73" filter="url(#sd)" opacity=".35"/>
<rect x="2327" y="777.500" width="73" height="73" fill="#b4b4b4"/><path d="M2363.500,784 L2393,814 L2363.500,844 L2334,814Z M2363.500,798 L2379,814 L2363.500,830 L2348,814Z" fill="none" stroke="#9c9c9c" stroke-width="5"/><rect x="2327" y="777.500" width="73" height="73" filter="url(#sn)" opacity=".5"/>
<rect x="2408.600" y="777.500" width="73" height="73" fill="url(#pd)"/>
<!-- row2 -->
<rect x="2162.700" y="859.500" width="73" height="73" fill="#e6d44e"/><path d="M2162.700,859.500 L2235.700,932.500 M2235.700,859.500 L2162.700,932.500" stroke="#fbf3b4" stroke-width="4"/><rect x="2162.700" y="859.500" width="73" height="73" filter="url(#sn)" opacity=".25"/>
<rect x="2245" y="859.500" width="73" height="73" fill="#f1cba4"/><path d="M2281.500,859.500 V932.500 M2245,896 H2318" stroke="#8e6e4a" stroke-width="15"/><path d="M2281.500,859.500 V932.500 M2245,896 H2318" stroke="#b89870" stroke-width="8" stroke-dasharray="3 3"/>
<rect x="2327" y="859.500" width="73" height="73" fill="url(#pb)"/>
<rect x="2408.600" y="859.500" width="73" height="73" fill="#8c957c"/><path d="M2408.600,859.500 h15 v15 h-15z M2466.600,859.500 h15 v15 h-15z M2408.600,917.500 h15 v15 h-15z M2466.600,917.500 h15 v15 h-15z" fill="#c4a468"/><rect x="2426" y="877" width="38" height="38" fill="#b0b09a"/><path d="M2423.600,859.500 h43 v15 h-43z M2423.600,917.500 h43 v15 h-43z" fill="#929a86"/>
<!-- row3 -->
<rect x="2162.700" y="941.500" width="73" height="73" fill="#5c5c5c"/><rect x="2162.700" y="941.500" width="73" height="73" filter="url(#sn)" opacity=".3"/><rect x="2162.700" y="941.500" width="73" height="73" filter="url(#sd)" opacity=".4"/>
<rect x="2245" y="941.500" width="73" height="73" fill="#4c6a56"/><rect x="2245" y="941.500" width="73" height="73" filter="url(#sn)" opacity=".25"/><rect x="2245" y="941.500" width="73" height="73" filter="url(#sd)" opacity=".35"/>
<rect x="2327" y="941.500" width="73" height="73" fill="#25375a"/>
<rect x="2408.600" y="941.500" width="73" height="73" fill="#3e2d20"/>
<!-- row4 -->
<rect x="2162.700" y="1023.500" width="73" height="54" fill="#5a2c0e"/><path d="M2170,1060 C2185,1040 2210,1070 2232,1040" stroke="#7a4018" stroke-width="10" fill="none" opacity=".6"/>
<rect x="2245" y="1023.500" width="73" height="54" fill="#a7ab93"/><path d="M2284,1066 c3,-4 6,-5 8,-9 M2262,1040 c2,-3 5,-3 6,-6" stroke="#c8ccb4" stroke-width="1.800" fill="none"/>
<rect x="2327" y="1023.500" width="73" height="54" fill="#f5c884"/><path d="M2327,1036 H2400 M2327,1051 H2400 M2327,1066 H2400" stroke="#d49a54" stroke-width="2.200"/>
<rect x="2408.600" y="1023.500" width="73" height="54" fill="#4e4e4e"/><path d="M2415,1050 C2435,1035 2455,1065 2478,1045" stroke="#5e5e5e" stroke-width="12" fill="none"/>
</svg>
<div class="a" style="left:2152px;top:1076px;width:382px;height:3px;background:#f0f0f0;border-top:1px solid #d0d0d0"></div>
<!-- tags -->
<svg class="a" style="left:2156px;top:1178px" width="378" height="36" viewBox="2156 1178 378 36" stroke-linejoin="round">
<circle cx="2172.300" cy="1195.200" r="9" fill="none" stroke="#555" stroke-width="1.600"/><path d="M2172.300,1190 V1200.400 M2167.100,1195.200 H2177.500" stroke="#555" stroke-width="1.600"/>
<path d="M2195.500,1203 V1186.500 H2203 L2205.500,1189.500 H2217.500 V1195" fill="none" stroke="#555" stroke-width="1.700"/><path d="M2195.500,1203 H2207" stroke="#555" stroke-width="1.700"/><circle cx="2214.500" cy="1202.500" r="6.300" fill="#f0f0f0" stroke="#555" stroke-width="1.400"/><path d="M2214.500,1199 V1206 M2211,1202.500 H2218" stroke="#555" stroke-width="1.400"/>
<path d="M2507.500,1186.500 H2515.500 V1201.500 H2507.500Z" fill="#dce8f8" stroke="#222" stroke-width="1.300"/><rect x="2507.500" y="1186.500" width="8" height="4" fill="#4a86d8"/><path d="M2514,1184.500 L2526,1195.500 L2514,1206.500Z" fill="#0a0a0a"/>
</svg>
<div class="a" style="left:2231px;top:1180px;width:259px;height:30px;background:#fff;border:1px solid #8c8c8c"></div>
<div class="t" style="left:2239.2px;top:1187.88px;font-size:15.5px;color:#9a9a9a;transform:scaleX(1.0310)">Hledat</div>
<!-- table -->
<div class="a" style="left:2152px;top:1222px;width:356px;height:31px;background:#f0f0f0;border-bottom:1px solid #dcdcdc"></div>
<div class="a" style="left:2152px;top:1253px;width:382px;height:83px;background:#fff"></div>
<div class="a" style="left:2202px;top:1222px;width:1.500px;height:31px;background:#d6d6d6"></div>
<div class="a" style="left:2283px;top:1222px;width:1.500px;height:31px;background:#d6d6d6"></div>
<div class="a" style="left:2334px;top:1222px;width:1.500px;height:31px;background:#d6d6d6"></div>
<div class="a" style="left:2455px;top:1222px;width:1.500px;height:31px;background:#d6d6d6"></div>
<div class="a" style="left:2507px;top:1222px;width:1.500px;height:31px;background:#d6d6d6"></div>
<div class="t" style="left:2209.6px;top:1231.28px;font-size:15.5px;color:#333;transform:scaleX(1.0567)">Jm...</div>
<svg class="a" style="left:2256px;top:1230px" width="18" height="14" viewBox="0 0 18 14"><path d="M3,10.500 L9,4.500 L15,10.500" fill="none" stroke="#333" stroke-width="2.200"/></svg>
<div class="t" style="left:2341.9px;top:1231.28px;font-size:15.5px;color:#333;transform:scaleX(1.0652)">Typ čáry</div>
<svg class="a" style="left:2163px;top:1260px" width="28" height="20" viewBox="0 0 28 20"><path d="M3,10 C8,2 20,2 25,10 C20,17.500 8,17.500 3,10Z" fill="#fff" stroke="#222" stroke-width="1.700"/><circle cx="14" cy="9.500" r="5" fill="#111"/><circle cx="12.300" cy="7.800" r="1.500" fill="#fff"/></svg>
<div class="t" style="left:2204.5px;top:1262.38px;font-size:15.5px;color:#333;transform:scaleX(1.0228)">Neoznač...</div>
<div class="a" style="left:2299px;top:1257px;width:25.500px;height:25px;background:#f55b4e"></div>
<div class="t" style="left:2341.9px;top:1262.38px;font-size:15.5px;color:#333;transform:scaleX(1.0410)">Standard</div>
<svg class="a" style="left:2474px;top:1257px" width="26" height="26" viewBox="0 0 26 26"><path d="M3,23 L6,16.500 L19,3.500 L22.500,7 L9.500,20Z" fill="#d42a20" stroke="#4a1a10" stroke-width="1"/><path d="M3,23 L6,16.500 L9.500,20Z" fill="#d8b888" stroke="#3a2a1a" stroke-width=".8"/><path d="M3,23 L4.200,20.300 L5.700,21.800Z" fill="#111"/></svg>
<div class="a" id="sb"></div>
<div class="a" style="left:0;top:1336px;width:2px;height:43px;background:#000"></div>
<svg class="a" style="left:0;top:1340px" width="120" height="40" viewBox="0 1340 120 40">
<circle cx="21" cy="1359.400" r="10.300" fill="#f6f6f6" stroke="#cfcfcf" stroke-width="1.800"/><path d="M21,1352.500 C25.500,1352.500 26.500,1357.500 24,1360.500 L21,1366.500 L18,1360.500 C15.500,1357.500 16.500,1352.500 21,1352.500Z" fill="#b8b8b8"/>
<circle cx="65.400" cy="1359.400" r="10.300" fill="#f8f8f8" stroke="#1c1c1c" stroke-width="2.200"/><circle cx="65.400" cy="1354" r="2.200" fill="#111"/><path d="M62.800,1357.200 H68 V1362.500 H67 V1366.500 H63.800 V1362.500 H62.800Z" fill="#111"/>
<rect x="93.300" y="1350.500" width="2" height="21.500" fill="#c4c4c4"/>
</svg>
<div class="t" style="left:108.6px;top:1349.97px;font-size:20px;color:#3c3c3c;transform:scaleX(1.0030)">Kliknutím nebo tažením vyberte objekty. Shift = Přidat/Odečíst. Ctrl = Přidat. Shift + Ctrl = Odečíst.</div>
<div class="a" style="left:2102px;top:1350px;width:2px;height:19px;background:#c4c4c4"></div>
<div class="t" style="left:2118px;top:1349.97px;font-size:20px;color:#3c3c3c;transform:scaleX(0.9900)">Pole hodnot</div>
<div class="a" style="left:2235px;top:1344px;width:319px;height:29px;background:#efefef;border:1.500px solid #b7c7dc"></div>
<div class="a" id="tk"></div>
<div class="a" style="left:78px;top:1379px;width:548px;height:56.500px;background:#fff"></div>
<div class="a" style="left:1256px;top:1380px;width:71px;height:56px;background:#e9e9e9"></div>
<div class="a" style="left:1327px;top:1383px;width:1.500px;height:50px;background:#bdbdbd"></div>
<div class="a" style="left:2551px;top:1382px;width:1.500px;height:52px;background:#a8a8a8"></div>
<div class="t" style="left:141.3px;top:1400.94px;font-size:22.4px;color:#3a3a3a;transform:scaleX(1.0441)">Sem zadejte hledaný výraz</div>
<div class="t" style="left:2401px;top:1386.66px;font-size:18px;color:#222;transform:scaleX(0.9102)">12:02</div>
<div class="t" style="left:2379.2px;top:1414.76px;font-size:18px;color:#222;transform:scaleX(0.9412)">07.05.2021</div>
<svg class="a" style="left:0;top:1380px" width="2560" height="56" viewBox="0 1380 2560 56" stroke-linejoin="round">
<!-- windows logo -->
<path d="M25.400,1401 L35,1399.500 V1409.800 H25.400Z M36.400,1399.300 L51.200,1397.300 V1409.800 H36.400Z M25.400,1411.300 H35 V1421.700 L25.400,1420.200Z M36.400,1411.300 H51.200 V1423.500 L36.400,1421.800Z" fill="#000"/>
<!-- search -->
<circle cx="112.600" cy="1406.600" r="8.200" fill="none" stroke="#1c1c1c" stroke-width="2.200"/><path d="M106.500,1412.800 L96.300,1422.500" stroke="#1c1c1c" stroke-width="2.400"/>
<!-- cortana -->
<circle cx="665.600" cy="1409.600" r="10.800" fill="none" stroke="#111" stroke-width="3.600"/>
<!-- task view -->
<g stroke="#111" stroke-width="2.200" fill="none"><rect x="733" y="1403.500" width="13.500" height="12.500"/><path d="M729.500,1397.500 H748.500 M729.500,1422 H748.500"/><path d="M753,1397 V1401 M753,1404 V1415 M753,1418 V1423" stroke-width="2.800"/></g>
<!-- store -->
<g><path d="M815,1398 V1393 C815,1389 832,1389 832,1393 V1398" fill="none" stroke="#2e2e2e" stroke-width="3"/><rect x="805" y="1398" width="37" height="30" fill="#353535"/><rect x="816" y="1403.500" width="7" height="7" fill="#f25022"/><rect x="824.500" y="1403.500" width="7" height="7" fill="#7fba00"/><rect x="816" y="1412" width="7" height="7" fill="#00a4ef"/><rect x="824.500" y="1412" width="7" height="7" fill="#ffb900"/></g>
<!-- edge -->
<g><circle cx="901.600" cy="1410" r="19" fill="#1e74c8"/><path d="M884,1403 C890,1388 915,1386 920.500,1402 C922,1410 916,1414 908,1413 C904,1412 905,1407 908,1405 C902,1399 889,1402 886,1414 C884,1410 883,1406 884,1403Z" fill="#3cc86e"/><path d="M884,1403 C890,1390 905,1388 912,1393 C900,1392 890,1398 886,1414 C884,1410 883,1406 884,1403Z" fill="#2aa8d8"/><path d="M897,1412 C895,1420 903,1428 914,1424 C908,1432 890,1430 886,1416 C887,1408 893,1404 898,1404 C896,1406 896,1409 897,1412Z" fill="#134a9c"/><path d="M898,1409 C898,1404 908,1404 908,1409 C908,1414 918,1415 920,1408 C921,1418 910,1424 903,1420 C899,1418 898,1413 898,1409Z" fill="#e8f2fc"/></g>
<!-- cloud app -->
<g><circle cx="980.600" cy="1410" r="17.500" fill="#4a8ff0"/><path d="M971,1416.500 C966,1416.500 966,1409.500 971.500,1409.500 C972,1403 982,1402 984,1407.500 C990,1406.500 992,1416.500 986,1416.500Z" fill="#fff"/><path d="M979,1408 L983,1412 H980.300 V1415 H977.700 V1412 H975Z" fill="#4a8ff0"/></g>
<!-- explorer -->
<g><path d="M1041,1396 C1041,1394 1042,1393.500 1044,1393.500 H1054 L1057,1397 H1041Z" fill="#e8a620"/><rect x="1041" y="1397" width="36" height="27.500" rx="1.500" fill="#fccd45"/><path d="M1041,1410 H1077 V1423 C1077,1424 1076,1424.500 1075,1424.500 H1043 C1042,1424.500 1041,1424 1041,1423Z" fill="#f6bc2c"/><path d="M1049,1424.500 V1413 H1069 V1424.500 H1064 V1417.500 H1054 V1424.500Z" fill="#3a86dc"/></g>
<!-- chrome -->
<g><circle cx="1137.500" cy="1410" r="17.500" fill="#de4b3c"/><path d="M1137.500,1410 L1122.500,1401 A17.500,17.500 0 0 0 1130,1426Z" fill="#2ea24c"/><path d="M1137.500,1410 L1130,1426 A17.500,17.500 0 0 0 1155,1409.500Z" fill="#fbc016"/><path d="M1137.500,1410 L1122.300,1401.200 A17.500,17.500 0 0 1 1154.500,1404 L1140,1404Z" fill="#de4b3c"/><path d="M1137.500,1410 L1146,1403.500 H1154.300 A17.500,17.500 0 0 1 1130,1426Z" fill="#fbc016"/><path d="M1137.500,1410 L1130,1426 A17.500,17.500 0 0 1 1122.400,1401.300 L1131,1410Z" fill="#2ea24c"/><circle cx="1137.500" cy="1410" r="8" fill="#f4f4f4"/><circle cx="1137.500" cy="1410" r="6.200" fill="#4a86e8"/></g>
<!-- app 11 -->
<g><rect x="1197.500" y="1394" width="35.500" height="32.500" fill="#3e7a98"/><path d="M1200,1398 C1210,1402 1218,1412 1222,1420 M1204,1410 C1210,1408 1214,1410 1216,1412 M1220,1398 C1218,1404 1220,1408 1222,1410" stroke="#e8f0f4" stroke-width="2.200" fill="none"/><path d="M1212,1416 V1424 M1217,1416 V1424" stroke="#fff" stroke-width="2.200"/></g>
<!-- sketchup -->
<g><rect x="1275.600" y="1391" width="37.500" height="37.500" fill="#e6effa" stroke="#b5c6db" stroke-width="1.300"/><path d="M1294,1395.500 L1306.500,1401.500 Q1309,1410 1306.500,1418.500 L1295,1424.500 L1283,1419.500 L1283,1415 L1289.500,1412.500 L1283,1410 L1283,1405.500 L1288.500,1403.500 L1284,1401Z" fill="#1f6db2"/><path d="M1287.500,1405.500 Q1296,1404 1298.500,1410 Q1299,1416 1294.500,1421 M1292.500,1401.500 Q1301.500,1401.500 1303.500,1409 Q1304,1415.500 1301,1419.500" fill="none" stroke="#8cc4ee" stroke-width="1.800"/></g>
<!-- tray -->
<path d="M2111.500,1415 L2119,1407.500 L2126.500,1415" fill="none" stroke="#222" stroke-width="2"/>
<g fill="none" stroke="#1a1a1a" stroke-width="1.900"><rect x="2151.500" y="1404.500" width="10.500" height="11.500" rx="1.500"/><path d="M2162,1408.500 L2167,1405.500 V1415 L2162,1412"/><path d="M2153,1400 C2156,1397.500 2161,1397.500 2164,1400 M2153,1420.500 C2156,1423 2161,1423 2164,1420.500"/></g>
<g><path d="M2190,1417.500 C2183.500,1417.500 2183.500,1409.500 2190,1409.500 C2191,1402 2202,1401.500 2203.500,1408 C2210.500,1407.500 2211.500,1417.500 2205,1417.500Z" fill="#f2f2f2" stroke="#c4c4c4" stroke-width="1"/><path d="M2197,1407 L2201,1411 H2198.500 V1414.500 H2195.500 V1411 H2193Z" fill="#cfcfcf"/></g>
<g fill="#0c0c0c"><path d="M2229,1400 L2235.500,1404 L2229,1408 L2222.500,1404Z M2242,1400 L2248.500,1404 L2242,1408 L2235.500,1404Z M2229,1408.500 L2235.500,1412.500 L2229,1416.500 L2222.500,1412.500Z M2242,1408.500 L2248.500,1412.500 L2242,1416.500 L2235.500,1412.500Z M2235.500,1414 L2241.500,1417.700 L2235.500,1421.500 L2229.500,1417.700Z"/></g>
<g><rect x="2268" y="1405.500" width="17" height="11" fill="#111"/><rect x="2285" y="1408.500" width="2.500" height="5" fill="#111"/><rect x="2270" y="1407.500" width="13" height="7" fill="#111" stroke="#d6d6d6" stroke-width="0"/><path d="M2261,1402 V1406 M2265,1402 V1406 M2259.500,1406 H2266.500 V1410 C2266.500,1413 2259.500,1413 2259.500,1410Z M2263,1412.500 V1417 H2268" fill="none" stroke="#111" stroke-width="1.800"/></g>
<g fill="none" stroke="#1a1a1a" stroke-width="2"><path d="M2304.500,1421 C2304.500,1410 2312,1402 2323,1402" opacity=".9"/><path d="M2309.500,1421 C2309.500,1413 2315,1407 2323,1407"/><path d="M2314.500,1421 C2314.500,1416 2318,1412 2323,1412"/><circle cx="2321" cy="1420" r="1.800" fill="#111"/></g>
<g fill="none" stroke="#1a1a1a" stroke-width="1.800"><path d="M2337.500,1407.500 H2342 L2348,1402 V1420 L2342,1414.500 H2337.500Z"/><path d="M2351.500,1407 C2353.500,1409.500 2353.500,1413 2351.500,1415.500 M2355,1404 C2358.500,1408 2358.500,1414 2355,1418 M2358.500,1401 C2363.500,1406.500 2363.500,1415.500 2358.500,1421"/></g>
<g><path d="M2495.500,1398.500 H2519.500 V1417.500 H2511 L2505.500,1423 V1417.500 H2495.500Z" fill="#0c0c0c"/><path d="M2499.500,1403.500 H2515.500 M2499.500,1408 H2515.500 M2499.500,1412.500 H2510" stroke="#e8e8e8" stroke-width="1.700"/><circle cx="2515.500" cy="1419.500" r="4.500" fill="#d6d6d6" stroke="#0c0c0c" stroke-width="1.700"/></g>
</svg>
</body></html>
